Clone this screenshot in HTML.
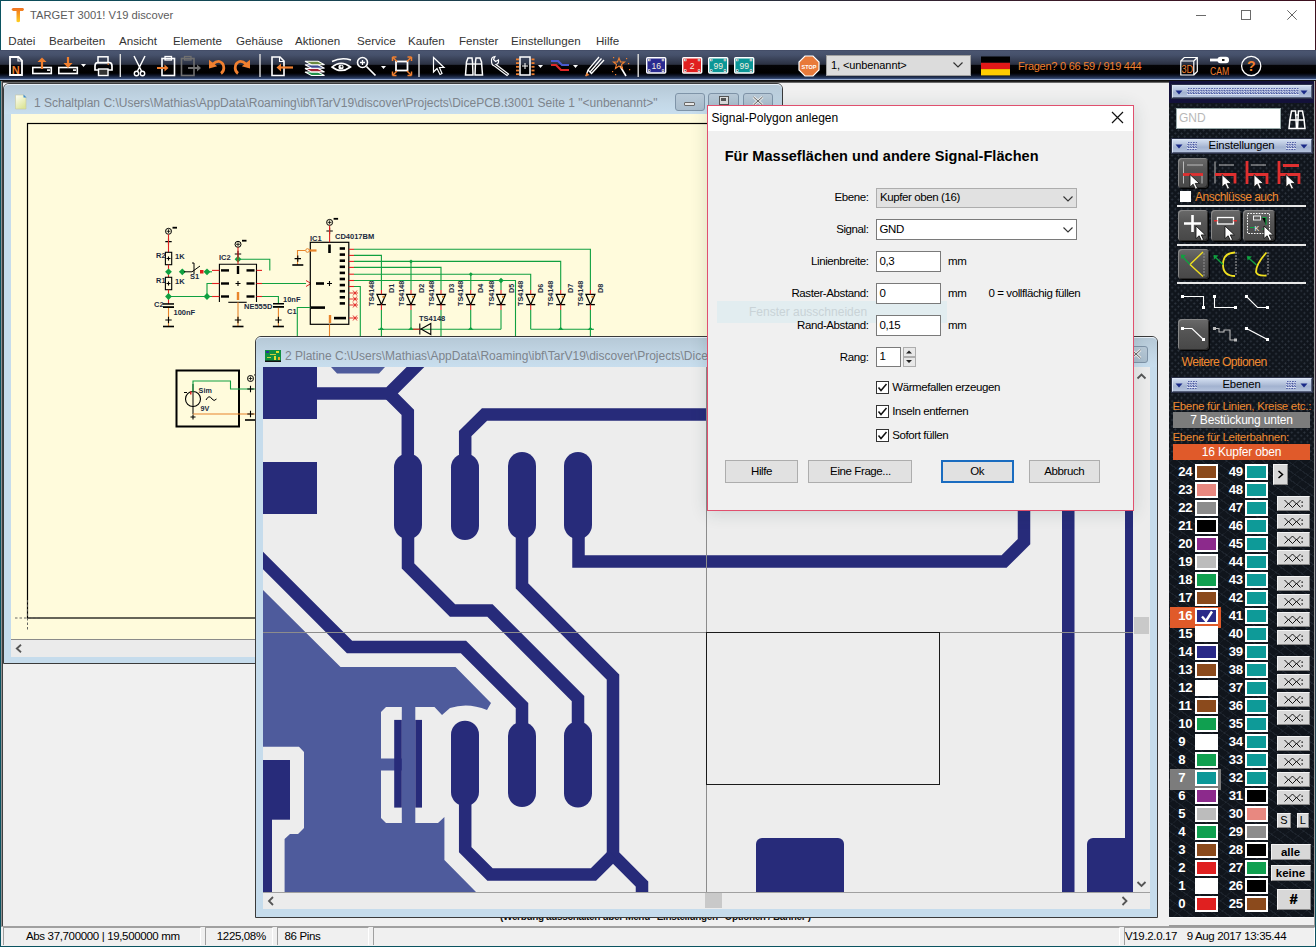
<!DOCTYPE html>
<html><head><meta charset="utf-8">
<style>
*{box-sizing:border-box;margin:0;padding:0}
html,body{width:1316px;height:947px;overflow:hidden;background:#f0f0f0;font-family:"Liberation Sans",sans-serif;position:relative}
.a{position:absolute}
.t{position:absolute;white-space:nowrap;line-height:1}
svg{position:absolute;overflow:visible}
</style></head><body>

<div class="a" style="left:0px;top:0px;width:1316px;height:50px;background:#fff"></div>
<div class="a" style="left:0px;top:0px;width:1316px;height:1px;background:linear-gradient(90deg,#0b4e5b 0%,#1f3a48 45%,#3a1a28 80%,#3d0f1e 100%)"></div>
<div class="a" style="left:0px;top:0px;width:1px;height:947px;background:#0b5361"></div>
<div class="a" style="left:1315px;top:0px;width:1px;height:947px;background:linear-gradient(#3d0f1e,#2a3040 60%,#0b5361)"></div>
<div class="a" style="left:0px;top:946px;width:1316px;height:1px;background:#0b5361"></div>
<svg style="left:10px;top:6px" width="16" height="18" viewBox="0 0 16 18"><defs><linearGradient id="tg" x1="0" y1="0" x2="0" y2="1"><stop offset="0" stop-color="#f07020"/><stop offset="1" stop-color="#ffd020"/></linearGradient></defs><path d="M1.5 3.5 Q2 1.5 4 2 L12 2 Q14 1.5 14 3.5 L13 5 L10 5 L10 15.5 Q8 17 6.5 15.5 L6.5 5 L3 5 Z" fill="url(#tg)"/></svg>
<div class="t" style="left:30.00px;top:10.12px;font-size:11.2px;color:#5c5c5c;font-weight:normal;">TARGET 3001! V19 discover</div>
<div class="a" style="left:1196px;top:15px;width:10px;height:1px;background:#6a6a6a"></div>
<div class="a" style="left:1241px;top:10px;width:10px;height:10px;border:1px solid #6a6a6a"></div>
<svg style="left:1287px;top:10px" width="10" height="10" viewBox="0 0 10 10"><path d="M0.3 0.3 L9.7 9.7 M9.7 0.3 L0.3 9.7" stroke="#666" stroke-width="1"/></svg>
<div class="t" style="left:8.30px;top:35.18px;font-size:11.6px;color:#333;font-weight:normal;">Datei</div>
<div class="t" style="left:49.00px;top:35.18px;font-size:11.6px;color:#333;font-weight:normal;">Bearbeiten</div>
<div class="t" style="left:119.00px;top:35.18px;font-size:11.6px;color:#333;font-weight:normal;">Ansicht</div>
<div class="t" style="left:173.00px;top:35.18px;font-size:11.6px;color:#333;font-weight:normal;">Elemente</div>
<div class="t" style="left:236.00px;top:35.18px;font-size:11.6px;color:#333;font-weight:normal;">Gehäuse</div>
<div class="t" style="left:295.00px;top:35.18px;font-size:11.6px;color:#333;font-weight:normal;">Aktionen</div>
<div class="t" style="left:357.00px;top:35.18px;font-size:11.6px;color:#333;font-weight:normal;">Service</div>
<div class="t" style="left:408.00px;top:35.18px;font-size:11.6px;color:#333;font-weight:normal;">Kaufen</div>
<div class="t" style="left:459.00px;top:35.18px;font-size:11.6px;color:#333;font-weight:normal;">Fenster</div>
<div class="t" style="left:511.00px;top:35.18px;font-size:11.6px;color:#333;font-weight:normal;">Einstellungen</div>
<div class="t" style="left:596.00px;top:35.18px;font-size:11.6px;color:#333;font-weight:normal;">Hilfe</div>
<div class="a" style="left:1px;top:81px;width:1168px;height:846px;background:#f0f0f0"></div>
<div class="a" style="left:1px;top:81px;width:1168px;height:1px;background:#222"></div>
<div class="a" style="left:1px;top:82px;width:1168px;height:1px;background:#6a6a6a"></div>
<div class="a" style="left:1px;top:81px;width:1px;height:846px;background:#909090"></div>
<div class="a" style="left:2px;top:81px;width:1px;height:846px;background:#404040"></div>
<div class="a" style="left:1px;top:926px;width:1168px;height:1px;background:#a0a0a0"></div>
<div class="a" style="left:0px;top:50px;width:1316px;height:31px;background:linear-gradient(#3e4660 0px,#4a5570 1px,#46516b 5px,#2c3244 14px,#252a38 14.5px,#050508 15px,#000 23px,#0a1020 25px,#2a3c60 28px,#3a5080 28.8px,#9aaed0 29px,#9aaed0 30px,#101010 30px)"></div>
<svg style="left:0;top:0" width="1316" height="82"><path d="M10 57 L18.5 57 L22 60.5 L22 75 L10 75 Z" fill="none" stroke="#fff" stroke-width="1.8"/><path d="M18 57 L18 61 L22 61" fill="none" stroke="#fff" stroke-width="1.2"/><text x="15.8" y="73.5" font-family="Liberation Sans" font-size="11" font-weight="bold" fill="#f08030" text-anchor="middle">N</text><rect x="32.8" y="67.5" width="18.5" height="6" fill="none" stroke="#fff" stroke-width="1.6"/><rect x="47" y="69.3" width="3" height="1.6" fill="#fff"/><path d="M42 69 L42 59" stroke="#f08030" stroke-width="2.2"/><path d="M37.5 62 L42 57.5 L46.5 62 Z" fill="#f08030"/><rect x="58.8" y="67.5" width="18.5" height="6" fill="none" stroke="#fff" stroke-width="1.6"/><rect x="73" y="69.3" width="3" height="1.6" fill="#fff"/><path d="M68 57 L68 65" stroke="#f08030" stroke-width="2.2"/><path d="M63.5 63 L68 68 L72.5 63 Z" fill="#f08030"/><path d="M81 64 L86 64 L83.5 67 Z" fill="#fff"/><rect x="98" y="56.8" width="10" height="6" fill="none" stroke="#fff" stroke-width="1.5"/><path d="M95 66 Q95 62.5 98 62.5 L109 62.5 Q112 62.5 112 66 L112 70 L95 70 Z" fill="none" stroke="#fff" stroke-width="1.7"/><rect x="98.5" y="69" width="9.5" height="6.5" fill="#333" stroke="#fff" stroke-width="1.4"/><rect x="107.5" y="63.5" width="1.5" height="1.3" fill="#f08030"/><rect x="119.6" y="54" width="1.4" height="23" fill="#ddd"/><path d="M134 56 L141.5 71 M145 56 L137.5 71" stroke="#fff" stroke-width="1.5"/><circle cx="136.5" cy="73.5" r="2.2" fill="none" stroke="#fff" stroke-width="1.4"/><circle cx="142.5" cy="73.5" r="2.2" fill="none" stroke="#fff" stroke-width="1.4"/><rect x="162" y="58.5" width="12.5" height="17" fill="none" stroke="#fff" stroke-width="1.6"/><rect x="165" y="56.5" width="6.5" height="3.5" fill="none" stroke="#fff" stroke-width="1.3"/><path d="M157 68 L166 68" stroke="#f08030" stroke-width="2"/><path d="M164.5 64.5 L168.5 68 L164.5 71.5 Z" fill="#f08030"/><rect x="181.5" y="58.5" width="12.5" height="17" fill="none" stroke="#707070" stroke-width="1.6"/><rect x="184.5" y="56.5" width="6.5" height="3.5" fill="none" stroke="#707070" stroke-width="1.3"/><path d="M188 68 L198 68" stroke="#707070" stroke-width="2"/><path d="M197 64.5 L201 68 L197 71.5 Z" fill="#707070"/><path d="M213 64 Q216.5 60.8 219.5 61.5 Q223.8 63 223.8 68 Q223.8 71.5 221 73.5" fill="none" stroke="#f08030" stroke-width="2.8"/><path d="M209 59.8 L209 68.6 L217.2 66.2 Z" fill="#f08030"/><path d="M246 64 Q242.5 60.8 239.5 61.5 Q235.2 63 235.2 68 Q235.2 71.5 238 73.5" fill="none" stroke="#f08030" stroke-width="2.8"/><path d="M250 59.8 L250 68.6 L241.8 66.2 Z" fill="#f08030"/><rect x="259.3" y="54" width="1.4" height="23" fill="#ddd"/><path d="M272 57 L280 57 L284 61 L284 75.5 L272 75.5 Z" fill="none" stroke="#fff" stroke-width="1.6"/><path d="M279.5 57 L279.5 61.5 L284 61.5" fill="none" stroke="#fff" stroke-width="1.1"/><rect x="279" y="66" width="0" height="0"/><path d="M279 67.5 L293 67.5" stroke="#f08030" stroke-width="2.2"/><path d="M281 63.5 L276.5 67.5 L281 71.5 Z" fill="#f08030"/><path d="M305 72.0 L318 72.0 L324.5 75.5 L311.5 75.5 Z" fill="#20904a" stroke="#fff" stroke-width="1.1"/><path d="M305 68.4 L318 68.4 L324.5 71.9 L311.5 71.9 Z" fill="#a02030" stroke="#fff" stroke-width="1.1"/><path d="M305 64.8 L318 64.8 L324.5 68.3 L311.5 68.3 Z" fill="#3a4a90" stroke="#fff" stroke-width="1.1"/><path d="M305 61.2 L318 61.2 L324.5 64.7 L311.5 64.7 Z" fill="#6a8a40" stroke="#fff" stroke-width="1.1"/><path d="M332 61.5 Q341 57 351 60" fill="none" stroke="#fff" stroke-width="1.4"/><path d="M332 67 Q341 59.5 350.5 67 Q341 74 332 67 Z" fill="none" stroke="#fff" stroke-width="1.6"/><circle cx="341" cy="67" r="2.6" fill="#fff"/><circle cx="341.5" cy="66.5" r="1" fill="#222"/><circle cx="362.5" cy="62.5" r="5" fill="none" stroke="#fff" stroke-width="1.6"/><path d="M360 62.5 L365 62.5 M362.5 60 L362.5 65" stroke="#fff" stroke-width="1.3"/><path d="M366.5 66.5 L375.5 75.5" stroke="#fff" stroke-width="1.7"/><path d="M381 66 L386 66 L383.5 69 Z" fill="#fff"/><rect x="396" y="61.5" width="11.5" height="9" fill="none" stroke="#fff" stroke-width="1.8"/><path d="M393 57.5 L397 61.5 M411 57.5 L407 61.5 M393 75 L397 71 M411 75 L407 71" stroke="#f08030" stroke-width="1.5"/><path d="M392.5 57 L396.5 57 M392.5 57 L392.5 61 M411.5 57 L407.5 57 M411.5 57 L411.5 61 M392.5 75.5 L396.5 75.5 M392.5 75.5 L392.5 71.5 M411.5 75.5 L407.5 75.5 M411.5 75.5 L411.5 71.5" stroke="#f08030" stroke-width="1.5"/><rect x="418.3" y="54" width="1.4" height="23" fill="#ddd"/><path d="M433.5 57.5 L433.5 72 L437 68.5 L440 74.5 L442 73.5 L439.5 67.5 L444 67.5 Z" fill="none" stroke="#fff" stroke-width="1.2"/><path d="M465.5 75 L466.5 62 L468 58 L472 58 L472.5 62 L473 75 Z M475 75 L475.5 62 L476 58 L480 58 L481.5 62 L482.5 75 Z" fill="none" stroke="#fff" stroke-width="1.5"/><path d="M466 64 L482 64" stroke="#fff" stroke-width="1.3"/><path d="M491.5 61 Q491 57 495 56.5 L493.5 59.5 L495.5 61.5 L498.5 60 Q499 64 496 64.5 L508.5 74 L507 75.5 L494.5 66 Q491.5 65.5 491.5 61 Z" fill="none" stroke="#fff" stroke-width="1.2"/><rect x="520" y="57" width="10" height="18" fill="none" stroke="#fff" stroke-width="1.5"/><path d="M525 63 L525 69 M522 66 L528 66" stroke="#fff" stroke-width="1"/><rect x="516" y="58.5" width="3" height="1.8" fill="#f08030"/><rect x="531.5" y="58.5" width="3" height="1.8" fill="#f08030"/><rect x="516" y="62.2" width="3" height="1.8" fill="#f08030"/><rect x="531.5" y="62.2" width="3" height="1.8" fill="#f08030"/><rect x="516" y="65.9" width="3" height="1.8" fill="#f08030"/><rect x="531.5" y="65.9" width="3" height="1.8" fill="#f08030"/><rect x="516" y="69.6" width="3" height="1.8" fill="#f08030"/><rect x="531.5" y="69.6" width="3" height="1.8" fill="#f08030"/><rect x="516" y="73.3" width="3" height="1.8" fill="#f08030"/><rect x="531.5" y="73.3" width="3" height="1.8" fill="#f08030"/><path d="M538 65 L543 65 L540.5 68 Z" fill="#fff"/><path d="M551 61 L558 61 L562 65 L569 65" fill="none" stroke="#4a5ad0" stroke-width="2.2"/><path d="M551 65 L556 65 L561 70 L569 70" fill="none" stroke="#e02828" stroke-width="2.2"/><path d="M573 65 L578 65 L575.5 68 Z" fill="#fff"/><path d="M586 76 L588 70 L599 57 M588 70 L591.5 73.5 L604 60 M590 72 L601.5 58.5" fill="none" stroke="#fff" stroke-width="1.3"/><path d="M585.5 76.5 L586.5 72.5 L589.5 75 Z" fill="#f08030"/><path d="M620 66 L626 76" stroke="#fff" stroke-width="1.6"/><path d="M619 58 L620.5 62 L624.5 62 L621.5 64.5 L622.5 68.5 L619 66 L615.5 68.5 L616.5 64.5 L613.5 62 L617.5 62 Z" fill="none" stroke="#f08030" stroke-width="1.1"/><rect x="613" y="57" width="1.2" height="1.2" fill="#f08030"/><rect x="626" y="58" width="1.2" height="1.2" fill="#f08030"/><rect x="628" y="63" width="1.2" height="1.2" fill="#f08030"/><rect x="612" y="71" width="1.2" height="1.2" fill="#f08030"/><rect x="615" y="74" width="1.2" height="1.2" fill="#f08030"/><rect x="629" y="69" width="1.2" height="1.2" fill="#f08030"/><rect x="637.5" y="54" width="1.4" height="23" fill="#ddd"/><rect x="646.7" y="57.7" width="19" height="15.3" rx="1" fill="#2a2a90" stroke="#fff" stroke-width="1.4"/><rect x="648.0" y="58.800000000000004" width="2.4" height="2.4" fill="#fff"/><rect x="648.6999999999999" y="59.5" width="1" height="1" fill="#000"/><rect x="661.8000000000001" y="58.800000000000004" width="2.4" height="2.4" fill="#fff"/><rect x="662.5" y="59.5" width="1" height="1" fill="#000"/><rect x="648.0" y="69.39999999999999" width="2.4" height="2.4" fill="#fff"/><rect x="648.6999999999999" y="70.1" width="1" height="1" fill="#000"/><rect x="661.8000000000001" y="69.39999999999999" width="2.4" height="2.4" fill="#fff"/><rect x="662.5" y="70.1" width="1" height="1" fill="#000"/><text transform="translate(656.2,68.8) scale(0.9,1)" font-family="Liberation Sans" font-size="9.5" fill="#f4f0e0" text-anchor="middle">16</text><rect x="682.7" y="57.7" width="19" height="15.3" rx="1" fill="#e02020" stroke="#fff" stroke-width="1.4"/><rect x="684.0" y="58.800000000000004" width="2.4" height="2.4" fill="#fff"/><rect x="684.6999999999999" y="59.5" width="1" height="1" fill="#000"/><rect x="697.8000000000001" y="58.800000000000004" width="2.4" height="2.4" fill="#fff"/><rect x="698.5" y="59.5" width="1" height="1" fill="#000"/><rect x="684.0" y="69.39999999999999" width="2.4" height="2.4" fill="#fff"/><rect x="684.6999999999999" y="70.1" width="1" height="1" fill="#000"/><rect x="697.8000000000001" y="69.39999999999999" width="2.4" height="2.4" fill="#fff"/><rect x="698.5" y="70.1" width="1" height="1" fill="#000"/><text transform="translate(692.2,68.8) scale(0.9,1)" font-family="Liberation Sans" font-size="9.5" fill="#f4f0e0" text-anchor="middle">2</text><rect x="708.7" y="57.7" width="19" height="15.3" rx="1" fill="#0c9696" stroke="#fff" stroke-width="1.4"/><rect x="710.0" y="58.800000000000004" width="2.4" height="2.4" fill="#fff"/><rect x="710.6999999999999" y="59.5" width="1" height="1" fill="#000"/><rect x="723.8000000000001" y="58.800000000000004" width="2.4" height="2.4" fill="#fff"/><rect x="724.5" y="59.5" width="1" height="1" fill="#000"/><rect x="710.0" y="69.39999999999999" width="2.4" height="2.4" fill="#fff"/><rect x="710.6999999999999" y="70.1" width="1" height="1" fill="#000"/><rect x="723.8000000000001" y="69.39999999999999" width="2.4" height="2.4" fill="#fff"/><rect x="724.5" y="70.1" width="1" height="1" fill="#000"/><text transform="translate(718.2,68.8) scale(0.9,1)" font-family="Liberation Sans" font-size="9.5" fill="#f4f0e0" text-anchor="middle">99</text><rect x="734.7" y="57.7" width="19" height="15.3" rx="1" fill="#0c9696" stroke="#fff" stroke-width="1.4"/><rect x="736.0" y="58.800000000000004" width="2.4" height="2.4" fill="#fff"/><rect x="736.6999999999999" y="59.5" width="1" height="1" fill="#000"/><rect x="749.8000000000001" y="58.800000000000004" width="2.4" height="2.4" fill="#fff"/><rect x="750.5" y="59.5" width="1" height="1" fill="#000"/><rect x="736.0" y="69.39999999999999" width="2.4" height="2.4" fill="#fff"/><rect x="736.6999999999999" y="70.1" width="1" height="1" fill="#000"/><rect x="749.8000000000001" y="69.39999999999999" width="2.4" height="2.4" fill="#fff"/><rect x="750.5" y="70.1" width="1" height="1" fill="#000"/><text transform="translate(744.2,68.8) scale(0.9,1)" font-family="Liberation Sans" font-size="9.5" fill="#f4f0e0" text-anchor="middle">99</text><path d="M805 56 L813 56 L819 62 L819 70 L813 76 L805 76 L799 70 L799 62 Z" fill="#e87a3a" stroke="#fff" stroke-width="1.2"/><text x="809" y="68.5" font-family="Liberation Sans" font-size="5.5" font-weight="bold" fill="#fff" text-anchor="middle">STOP</text><rect x="981" y="56.5" width="29" height="6.3" fill="#000"/><rect x="981" y="62.8" width="29" height="6.3" fill="#e01818"/><rect x="981" y="69.1" width="29" height="6.3" fill="#ffcc00"/><path d="M1180.8 61 L1193.8 61 L1193.8 75 L1180.8 75 Z M1180.8 61 L1184.3 57.5 L1197.3 57.5 L1197.3 71.5 L1193.8 75 M1193.8 61 L1197.3 57.5" fill="none" stroke="#fff" stroke-width="1.2"/><text transform="translate(1187.3,72.6) scale(0.85,1)" font-family="Liberation Sans" font-size="10.8" fill="#f08030" text-anchor="middle">3D</text><rect x="1210" y="58.6" width="9" height="2.8" fill="#fff"/><rect x="1217.5" y="56.8" width="11.5" height="6.4" rx="3" fill="#fff"/><rect x="1222" y="59" width="2.5" height="2" fill="#222"/><text transform="translate(1219.6,74.6) scale(0.82,1)" font-family="Liberation Sans" font-size="10.5" fill="#f08030" text-anchor="middle">CAM</text><circle cx="1251.2" cy="66" r="9.6" fill="none" stroke="#fff" stroke-width="1.3"/><text x="1251.2" y="71.3" font-family="Liberation Sans" font-size="14" font-weight="bold" fill="#f08030" text-anchor="middle">?</text></svg>
<div class="a" style="left:826px;top:55px;width:145px;height:21px;background:#dcdcdc;border:1px solid #a0a0a0"></div>
<div class="t" style="left:831.00px;top:60.19px;font-size:11px;color:#000;font-weight:normal;letter-spacing:-0.1px">1, &lt;unbenannt&gt;</div>
<svg style="left:953px;top:62px" width="10" height="6"><path d="M0.5 0.5 L5 5 L9.5 0.5" fill="none" stroke="#333" stroke-width="1.2"/></svg>
<div class="t" style="left:1018.00px;top:60.69px;font-size:11px;color:#f08030;font-weight:normal;letter-spacing:-0.25px">Fragen? 0 66 59 / 919 444</div>
<div class="a" style="left:3px;top:83px;width:780px;height:581px;background:#c6dcec;border:1px solid #3a3a3a;border-radius:6px 6px 0 0"></div>
<div class="a" style="left:4px;top:84px;width:778px;height:30px;background:linear-gradient(#b6c9d7,#c3d7e6 60%,#c8deee);border-radius:5px 5px 0 0;border-top:1px solid #e8f0f8"></div>
<svg style="left:15px;top:94px" width="12" height="16" viewBox="0 0 12 16"><defs><linearGradient id="dg" x1="0" y1="0" x2="0.6" y2="1"><stop offset="0" stop-color="#fffff8"/><stop offset="1" stop-color="#dde59a"/></linearGradient></defs><path d="M0.5 1 L8.5 1 L11 3.5 L11 15 L0.5 15 Z" fill="url(#dg)" stroke="#c8c8a0" stroke-width="0.6"/><path d="M8.5 0.5 L11.5 3.5 L8.5 3.5 Z" fill="#3a8ad0"/></svg>
<div class="t" style="left:34.00px;top:97.14px;font-size:12px;color:#7d848c;font-weight:normal;">1 Schaltplan C:\Users\Mathias\AppData\Roaming\ibf\TarV19\discover\Projects\DicePCB.t3001 Seite 1 &quot;&lt;unbenannt&gt;&quot;</div>
<div class="a" style="left:674.5px;top:93.3px;width:30.5px;height:17.5px;border:1px solid #7f94a8;border-radius:3px;background:linear-gradient(#b9cad8,#aabdcd)"></div>
<div class="a" style="left:708px;top:93.3px;width:31px;height:17.5px;border:1px solid #7f94a8;border-radius:3px;background:linear-gradient(#b9cad8,#aabdcd)"></div>
<div class="a" style="left:742.5px;top:93.3px;width:30.5px;height:17.5px;border:1px solid #7f94a8;border-radius:3px;background:linear-gradient(#b9cad8,#aabdcd)"></div>
<div class="a" style="left:684px;top:101.5px;width:11px;height:4px;background:#e8e8e8;border:1px solid #6a6a6a;border-radius:1px"></div>
<div class="a" style="left:718.5px;top:96px;width:10px;height:9px;background:#e0e0e0;border:1px solid #555"></div>
<div class="a" style="left:721px;top:98px;width:5px;height:2.5px;background:#555"></div>
<svg style="left:752px;top:96px" width="12" height="10"><path d="M1.5 1 L10.5 9 M10.5 1 L1.5 9" stroke="#eee" stroke-width="3"/><path d="M1.5 1 L10.5 9 M10.5 1 L1.5 9" stroke="#666" stroke-width="1"/></svg>
<div class="a" style="left:11px;top:114px;width:764px;height:525px;background:#fffbdc"></div>
<div class="a" style="left:11px;top:639px;width:764px;height:18px;background:#ebebeb;border-top:1px solid #8a8a8a"></div>
<svg style="left:15px;top:644px" width="8" height="9"><path d="M6 0.8 L1.8 4.5 L6 8.2" fill="none" stroke="#555" stroke-width="1.8"/></svg>
<svg style="left:11px;top:114px;overflow:hidden" width="764" height="525" viewBox="11 114 764 525"><rect x="27.5" y="123.5" width="800" height="494.5" fill="none" stroke="#000" stroke-width="1.2"/><path d="M15 618 L40 618 M27.5 600 L27.5 630" stroke="#555" stroke-width="0.9" stroke-dasharray="2.5 2"/><circle cx="168.5" cy="231.3" r="3" fill="none" stroke="#000" stroke-width="1"/><path d="M166.5 231.3 L170.5 231.3 M168.5 229.3 L168.5 233.3" stroke="#000" stroke-width="0.8"/><rect x="172.5" y="226.8" width="4.5" height="1.8" fill="#000"/><path d="M165.3 241.6 L171.7 241.6 M168.5 238.4 L168.5 244.79999999999998" stroke="#000" stroke-width="1.1"/><path d="M168.5 234.3 L168.5 252.3" fill="none" stroke="#e02020" stroke-width="1.1"/><rect x="165.4" y="252.3" width="6.3" height="12.4" fill="none" stroke="#000" stroke-width="1.1"/><path d="M166.5 258.5 L170.5 258.5 M168.5 256.5 L168.5 260.5" stroke="#000" stroke-width="1.1"/><path d="M168.5 264.7 L168.5 277.3" fill="none" stroke="#e02020" stroke-width="1.1"/><rect x="165.4" y="277.3" width="6.3" height="12.4" fill="none" stroke="#000" stroke-width="1.1"/><path d="M166.5 283.5 L170.5 283.5 M168.5 281.5 L168.5 285.5" stroke="#000" stroke-width="1.1"/><path d="M168.5 289.7 L168.5 304" fill="none" stroke="#e02020" stroke-width="1.1"/><path d="M165.1 271.8 L168.5 268.40000000000003 L171.9 271.8 L168.5 275.2 Z" fill="#10a040"/><path d="M165.1 296.5 L168.5 293.1 L171.9 296.5 L168.5 299.9 Z" fill="#10a040"/><rect x="163" y="303.2" width="11" height="1.5" fill="#000"/><rect x="163" y="306.2" width="11" height="1.8" fill="#000"/><path d="M168.5 308 L168.5 326.5" fill="none" stroke="#e8842a" stroke-width="1.1"/><path d="M165.3 320 L171.7 320 M168.5 316.8 L168.5 323.2" stroke="#000" stroke-width="1.1"/><rect x="163.0" y="325.7" width="11" height="1.6" fill="#000"/><text x="156" y="258" font-family="Liberation Sans" font-size="7.5" font-weight="bold" fill="#1a2a40">R2</text><text x="175" y="258.5" font-family="Liberation Sans" font-size="7.5" font-weight="bold" fill="#1a2a40">1K</text><text x="156" y="283" font-family="Liberation Sans" font-size="7.5" font-weight="bold" fill="#1a2a40">R1</text><text x="175" y="283.5" font-family="Liberation Sans" font-size="7.5" font-weight="bold" fill="#1a2a40">1K</text><text x="154" y="307" font-family="Liberation Sans" font-size="7.5" font-weight="bold" fill="#1a2a40">C2</text><text x="173.5" y="315" font-family="Liberation Sans" font-size="7.5" font-weight="bold" fill="#1a2a40">100nF</text><path d="M178.9 271.8 L182.3 268.40000000000003 L185.70000000000002 271.8 L182.3 275.2 Z" fill="#10a040"/><path d="M203.6 271.8 L207 268.40000000000003 L210.4 271.8 L207 275.2 Z" fill="#10a040"/><rect x="200" y="270" width="3.5" height="3.5" fill="#e02020"/><path d="M184 271.8 L192 271.8 L200 266" fill="none" stroke="#000" stroke-width="1"/><path d="M192 263 L194 263 L194 274" fill="none" stroke="#000" stroke-width="1"/><text x="190" y="279" font-family="Liberation Sans" font-size="7.5" font-weight="bold" fill="#1a2a40">S1</text><path d="M219.4 302 L219.4 264.3 L256.5 264.3 L256.5 302" fill="none" stroke="#000" stroke-width="1.1"/><path d="M228.3 302.3 L246.7 302.3" stroke="#000" stroke-width="1.1"/><rect x="221" y="269.2" width="8" height="2.4" fill="#000"/><path d="M212 270.4 L219.4 270.4" stroke="#e02020" stroke-width="1.1"/><rect x="221" y="282.3" width="8" height="2.4" fill="#000"/><path d="M212 283.5 L219.4 283.5" stroke="#e02020" stroke-width="1.1"/><rect x="221" y="295.3" width="8" height="2.4" fill="#000"/><path d="M212 296.5 L219.4 296.5" stroke="#e02020" stroke-width="1.1"/><rect x="246.5" y="269.2" width="8" height="2.4" fill="#000"/><path d="M256.5 270.4 L262 270.4" stroke="#e02020" stroke-width="1.1"/><rect x="246.5" y="282.3" width="8" height="2.4" fill="#000"/><path d="M256.5 283.5 L262 283.5" stroke="#e02020" stroke-width="1.1"/><rect x="246.5" y="295.3" width="8" height="2.4" fill="#000"/><path d="M256.5 296.5 L262 296.5" stroke="#e02020" stroke-width="1.1"/><rect x="236.8" y="266" width="2.4" height="8" fill="#000"/><rect x="236.8" y="292" width="2.4" height="8" fill="#e8842a"/><path d="M235.5 283.5 L240.5 283.5 M238 281.0 L238 286.0" stroke="#000" stroke-width="1.1"/><text x="219" y="260" font-family="Liberation Sans" font-size="7.5" font-weight="bold" fill="#1a2a40">IC2</text><text x="244" y="309" font-family="Liberation Sans" font-size="7.5" font-weight="bold" fill="#1a2a40">NE555D</text><circle cx="238" cy="244.3" r="3" fill="none" stroke="#000" stroke-width="1"/><path d="M236 244.3 L240 244.3 M238 242.3 L238 246.3" stroke="#000" stroke-width="0.8"/><rect x="242" y="239.8" width="4.5" height="1.8" fill="#000"/><path d="M234.8 254 L241.2 254 M238 250.8 L238 257.2" stroke="#000" stroke-width="1.1"/><path d="M234.6 259.2 L238 255.79999999999998 L241.4 259.2 L238 262.59999999999997 Z" fill="#10a040"/><path d="M238 247.3 L238 264.3" fill="none" stroke="#e02020" stroke-width="1.1"/><path d="M238 259.2 L269.8 259.2 L269.8 270.4" fill="none" stroke="#10a040" stroke-width="1.1"/><path d="M238 302.3 L238 326.5" fill="none" stroke="#e8842a" stroke-width="1.1"/><path d="M234.8 320 L241.2 320 M238 316.8 L238 323.2" stroke="#000" stroke-width="1.1"/><rect x="232.5" y="325.7" width="11" height="1.6" fill="#000"/><path d="M168.5 296.5 L212 296.5" fill="none" stroke="#10a040" stroke-width="1.1"/><path d="M203.6 296.5 L207 293.1 L210.4 296.5 L207 299.9 Z" fill="#10a040"/><path d="M207 296.5 L207 283.5 L212 283.5" fill="none" stroke="#10a040" stroke-width="1.1"/><path d="M207 271.8 L212 271.8" fill="none" stroke="#10a040" stroke-width="1.1"/><path d="M262 283.5 L306 283.5" fill="none" stroke="#10a040" stroke-width="1.1"/><path d="M306 280.5 L311 283.5 L306 286.5" fill="none" stroke="#e02020" stroke-width="1"/><path d="M262 296.5 L278.4 296.5 L278.4 303" fill="none" stroke="#10a040" stroke-width="1.1"/><rect x="273" y="303" width="11" height="1.5" fill="#000"/><rect x="273" y="306" width="11" height="1.8" fill="#000"/><path d="M278.4 308 L278.4 326.5" fill="none" stroke="#e8842a" stroke-width="1.1"/><path d="M275.2 320 L281.59999999999997 320 M278.4 316.8 L278.4 323.2" stroke="#000" stroke-width="1.1"/><rect x="272.9" y="325.7" width="11" height="1.6" fill="#000"/><text x="283" y="302" font-family="Liberation Sans" font-size="7.5" font-weight="bold" fill="#1a2a40">10nF</text><text x="287" y="314" font-family="Liberation Sans" font-size="7.5" font-weight="bold" fill="#1a2a40">C1</text><rect x="310.3" y="242.3" width="38.5" height="82" fill="none" stroke="#000" stroke-width="1.2"/><circle cx="329.6" cy="222.4" r="3" fill="none" stroke="#000" stroke-width="1"/><path d="M327.6 222.4 L331.6 222.4 M329.6 220.4 L329.6 224.4" stroke="#000" stroke-width="0.8"/><rect x="333.6" y="217.9" width="4.5" height="1.8" fill="#000"/><path d="M326.40000000000003 231 L332.8 231 M329.6 227.8 L329.6 234.2" stroke="#000" stroke-width="1.1"/><path d="M329.6 225.4 L329.6 242.3" fill="none" stroke="#e02020" stroke-width="1.1"/><text x="310" y="240.5" font-family="Liberation Sans" font-size="7.5" font-weight="bold" fill="#1a2a40">IC1</text><text x="335" y="239" font-family="Liberation Sans" font-size="7.5" font-weight="bold" fill="#1a2a40">CD4017BM</text><rect x="339.7" y="247.2" width="5.3" height="2.6" fill="#000"/><rect x="339.7" y="253.29999999999998" width="5.3" height="2.6" fill="#000"/><rect x="339.7" y="259.4" width="5.3" height="2.6" fill="#000"/><rect x="339.7" y="265.5" width="5.3" height="2.6" fill="#000"/><rect x="339.7" y="271.59999999999997" width="5.3" height="2.6" fill="#000"/><rect x="339.7" y="277.7" width="5.3" height="2.6" fill="#000"/><rect x="339.7" y="283.8" width="5.3" height="2.6" fill="#000"/><rect x="339.7" y="289.9" width="5.3" height="2.6" fill="#000"/><rect x="339.7" y="296.0" width="5.3" height="2.6" fill="#000"/><rect x="339.7" y="302.09999999999997" width="5.3" height="2.6" fill="#000"/><rect x="334" y="316.8" width="12" height="2.6" fill="#000"/><rect x="328.2" y="244.5" width="2.6" height="8.5" fill="#000"/><rect x="316" y="282.2" width="8" height="2.6" fill="#000"/><rect x="310.5" y="306.3" width="14.5" height="2.6" fill="#000"/><rect x="328.8" y="315" width="2.4" height="8" fill="#e8842a"/><path d="M327.0 283.5 L332.0 283.5 M329.5 281.0 L329.5 286.0" stroke="#000" stroke-width="1.1"/><path d="M329.5 324.3 L329.5 338" fill="none" stroke="#e8842a" stroke-width="1.1"/><rect x="324.0" y="337.2" width="11" height="1.6" fill="#000"/><circle cx="307.5" cy="250.5" r="1.8" fill="none" stroke="#e8842a" stroke-width="1"/><rect x="309" y="249.4" width="7.5" height="2.2" fill="#e8842a"/><path d="M305.5 250.5 L297.5 250.5 L297.5 265" fill="none" stroke="#e8842a" stroke-width="1.1"/><path d="M294.6 258.6 L301.0 258.6 M297.8 255.40000000000003 L297.8 261.8" stroke="#000" stroke-width="1.1"/><rect x="292.3" y="264.2" width="11" height="1.6" fill="#000"/><path d="M297.3 339 L297.3 307.5 L310.3 307.5" fill="none" stroke="#10a040" stroke-width="1.1"/><path d="M348.8 249.3 L354 249.3" fill="none" stroke="#e02020" stroke-width="1.1"/><path d="M348.8 255.4 L354 255.4" fill="none" stroke="#e02020" stroke-width="1.1"/><path d="M348.8 261.4 L354 261.4" fill="none" stroke="#e02020" stroke-width="1.1"/><path d="M348.8 267.4 L354 267.4" fill="none" stroke="#e02020" stroke-width="1.1"/><path d="M348.8 274.2 L354 274.2" fill="none" stroke="#e02020" stroke-width="1.1"/><path d="M348.8 280.5 L354 280.5" fill="none" stroke="#e02020" stroke-width="1.1"/><path d="M348.8 286.5 L354 286.5" fill="none" stroke="#e02020" stroke-width="1.1"/><path d="M354 249.3 L590.4 249.3 L590.4 290" fill="none" stroke="#10a040" stroke-width="1.1"/><path d="M354 255.4 L381.4 255.4 L381.4 290" fill="none" stroke="#10a040" stroke-width="1.1"/><path d="M354 261.4 L560.7 261.4 L560.7 290" fill="none" stroke="#10a040" stroke-width="1.1"/><path d="M409 261.4 L411 259.4 L413 261.4 L411 263.4 Z" fill="#10a040"/><path d="M411 261.4 L411 290" fill="none" stroke="#10a040" stroke-width="1.1"/><path d="M354 267.4 L441 267.4 L441 290" fill="none" stroke="#10a040" stroke-width="1.1"/><path d="M354 274.2 L530.7 274.2 L530.7 290" fill="none" stroke="#10a040" stroke-width="1.1"/><path d="M468.8 274.2 L470.8 272.2 L472.8 274.2 L470.8 276.2 Z" fill="#10a040"/><path d="M470.8 274.2 L470.8 290" fill="none" stroke="#10a040" stroke-width="1.1"/><path d="M354 280.5 L515.5 280.5 L515.5 340" fill="none" stroke="#10a040" stroke-width="1.1"/><path d="M498.2 280.5 L501 277.7 L503.8 280.5 L501 283.3 Z" fill="#10a040"/><path d="M501 280.5 L501 290" fill="none" stroke="#10a040" stroke-width="1.1"/><path d="M354 286.5 L360.3 286.5 L360.3 340" fill="none" stroke="#10a040" stroke-width="1.1"/><path d="M349 293 L358 293 M353 290.5 L357 295.5 M353 295.5 L357 290.5" stroke="#e02020" stroke-width="0.9"/><path d="M349 299 L358 299 M353 296.5 L357 301.5 M353 301.5 L357 296.5" stroke="#e02020" stroke-width="0.9"/><path d="M349 305 L358 305 M353 302.5 L357 307.5 M353 307.5 L357 302.5" stroke="#e02020" stroke-width="0.9"/><path d="M349 318 L358 318 M353 315.5 L357 320.5 M353 320.5 L357 315.5" stroke="#e02020" stroke-width="0.9"/><path d="M376.9 294.3 L385.9 294.3 L381.4 304.6 Z" fill="none" stroke="#000" stroke-width="1.2"/><path d="M376.9 304.6 L385.9 304.6" stroke="#000" stroke-width="1.3"/><path d="M381.4 290 L381.4 294.3 M381.4 304.6 L381.4 310" stroke="#e02020" stroke-width="1.1"/><rect x="382.4" y="295.8" width="2" height="2" fill="#e8842a"/><path d="M381.4 310 L381.4 340" fill="none" stroke="#10a040" stroke-width="1.1"/><text transform="translate(373.9,306) rotate(-90)" font-family="Liberation Sans" font-size="7.2" font-weight="bold" fill="#1a2a40">TS4148</text><text transform="translate(393.9,293) rotate(-90)" font-family="Liberation Sans" font-size="7.2" font-weight="bold" fill="#1a2a40">D1</text><path d="M406.5 294.3 L415.5 294.3 L411 304.6 Z" fill="none" stroke="#000" stroke-width="1.2"/><path d="M406.5 304.6 L415.5 304.6" stroke="#000" stroke-width="1.3"/><path d="M411 290 L411 294.3 M411 304.6 L411 310" stroke="#e02020" stroke-width="1.1"/><rect x="412" y="295.8" width="2" height="2" fill="#e8842a"/><path d="M411 310 L411 329.2" fill="none" stroke="#10a040" stroke-width="1.1"/><text transform="translate(403.5,306) rotate(-90)" font-family="Liberation Sans" font-size="7.2" font-weight="bold" fill="#1a2a40">TS4148</text><text transform="translate(423.5,293) rotate(-90)" font-family="Liberation Sans" font-size="7.2" font-weight="bold" fill="#1a2a40">D2</text><path d="M436.5 294.3 L445.5 294.3 L441 304.6 Z" fill="none" stroke="#000" stroke-width="1.2"/><path d="M436.5 304.6 L445.5 304.6" stroke="#000" stroke-width="1.3"/><path d="M441 290 L441 294.3 M441 304.6 L441 310" stroke="#e02020" stroke-width="1.1"/><rect x="442" y="295.8" width="2" height="2" fill="#e8842a"/><path d="M441 310 L441 340" fill="none" stroke="#10a040" stroke-width="1.1"/><text transform="translate(433.5,306) rotate(-90)" font-family="Liberation Sans" font-size="7.2" font-weight="bold" fill="#1a2a40">TS4148</text><text transform="translate(453.5,293) rotate(-90)" font-family="Liberation Sans" font-size="7.2" font-weight="bold" fill="#1a2a40">D3</text><path d="M466.2 294.3 L475.2 294.3 L470.7 304.6 Z" fill="none" stroke="#000" stroke-width="1.2"/><path d="M466.2 304.6 L475.2 304.6" stroke="#000" stroke-width="1.3"/><path d="M470.7 290 L470.7 294.3 M470.7 304.6 L470.7 310" stroke="#e02020" stroke-width="1.1"/><rect x="471.7" y="295.8" width="2" height="2" fill="#e8842a"/><path d="M470.7 310 L470.7 329.2" fill="none" stroke="#10a040" stroke-width="1.1"/><text transform="translate(463.2,306) rotate(-90)" font-family="Liberation Sans" font-size="7.2" font-weight="bold" fill="#1a2a40">TS4148</text><text transform="translate(483.2,293) rotate(-90)" font-family="Liberation Sans" font-size="7.2" font-weight="bold" fill="#1a2a40">D4</text><path d="M496.5 294.3 L505.5 294.3 L501 304.6 Z" fill="none" stroke="#000" stroke-width="1.2"/><path d="M496.5 304.6 L505.5 304.6" stroke="#000" stroke-width="1.3"/><path d="M501 290 L501 294.3 M501 304.6 L501 310" stroke="#e02020" stroke-width="1.1"/><rect x="502" y="295.8" width="2" height="2" fill="#e8842a"/><path d="M501 310 L501 329.2" fill="none" stroke="#10a040" stroke-width="1.1"/><text transform="translate(493.5,306) rotate(-90)" font-family="Liberation Sans" font-size="7.2" font-weight="bold" fill="#1a2a40">TS4148</text><text transform="translate(513.5,293) rotate(-90)" font-family="Liberation Sans" font-size="7.2" font-weight="bold" fill="#1a2a40">D5</text><path d="M526.2 294.3 L535.2 294.3 L530.7 304.6 Z" fill="none" stroke="#000" stroke-width="1.2"/><path d="M526.2 304.6 L535.2 304.6" stroke="#000" stroke-width="1.3"/><path d="M530.7 290 L530.7 294.3 M530.7 304.6 L530.7 310" stroke="#e02020" stroke-width="1.1"/><rect x="531.7" y="295.8" width="2" height="2" fill="#e8842a"/><path d="M530.7 310 L530.7 329.2" fill="none" stroke="#10a040" stroke-width="1.1"/><text transform="translate(523.2,306) rotate(-90)" font-family="Liberation Sans" font-size="7.2" font-weight="bold" fill="#1a2a40">TS4148</text><text transform="translate(543.2,293) rotate(-90)" font-family="Liberation Sans" font-size="7.2" font-weight="bold" fill="#1a2a40">D6</text><path d="M556.2 294.3 L565.2 294.3 L560.7 304.6 Z" fill="none" stroke="#000" stroke-width="1.2"/><path d="M556.2 304.6 L565.2 304.6" stroke="#000" stroke-width="1.3"/><path d="M560.7 290 L560.7 294.3 M560.7 304.6 L560.7 310" stroke="#e02020" stroke-width="1.1"/><rect x="561.7" y="295.8" width="2" height="2" fill="#e8842a"/><path d="M560.7 310 L560.7 329.2" fill="none" stroke="#10a040" stroke-width="1.1"/><text transform="translate(553.2,306) rotate(-90)" font-family="Liberation Sans" font-size="7.2" font-weight="bold" fill="#1a2a40">TS4148</text><text transform="translate(573.2,293) rotate(-90)" font-family="Liberation Sans" font-size="7.2" font-weight="bold" fill="#1a2a40">D7</text><path d="M585.9 294.3 L594.9 294.3 L590.4 304.6 Z" fill="none" stroke="#000" stroke-width="1.2"/><path d="M585.9 304.6 L594.9 304.6" stroke="#000" stroke-width="1.3"/><path d="M590.4 290 L590.4 294.3 M590.4 304.6 L590.4 310" stroke="#e02020" stroke-width="1.1"/><rect x="591.4" y="295.8" width="2" height="2" fill="#e8842a"/><path d="M590.4 310 L590.4 340" fill="none" stroke="#10a040" stroke-width="1.1"/><text transform="translate(582.9,306) rotate(-90)" font-family="Liberation Sans" font-size="7.2" font-weight="bold" fill="#1a2a40">TS4148</text><text transform="translate(602.9,293) rotate(-90)" font-family="Liberation Sans" font-size="7.2" font-weight="bold" fill="#1a2a40">D8</text><path d="M378 329.2 L501 329.2" fill="none" stroke="#10a040" stroke-width="1.1"/><path d="M530.7 329.2 L594 329.2" fill="none" stroke="#10a040" stroke-width="1.1"/><path d="M378.4 330 L381.4 327 L384.4 330 Z" fill="#10a040"/><path d="M408 330 L411 327 L414 330 Z" fill="#10a040"/><path d="M467.7 330 L470.7 327 L473.7 330 Z" fill="#10a040"/><path d="M557.7 330 L560.7 327 L563.7 330 Z" fill="#10a040"/><path d="M587.4 330 L590.4 327 L593.4 330 Z" fill="#10a040"/><path d="M419.8 323.5 L419.8 334.5 M430.8 323.5 L421 329 L430.8 334.5 Z" fill="none" stroke="#000" stroke-width="1.1"/><path d="M413 329.2 L419.8 329.2" fill="none" stroke="#e02020" stroke-width="1.1"/><text x="419" y="320.5" font-family="Liberation Sans" font-size="7.5" font-weight="bold" fill="#1a2a40">TS4148</text><rect x="176.5" y="370.5" width="62.5" height="56" fill="none" stroke="#000" stroke-width="2"/><circle cx="193" cy="399" r="7.5" fill="none" stroke="#000" stroke-width="1.1"/><path d="M193 384 L193 414" stroke="#000" stroke-width="1"/><path d="M193 392 L193 381 L230.5 381 L230.5 389 L263 389" fill="none" stroke="#10a040" stroke-width="1.1"/><path d="M193 414 L263 414" fill="none" stroke="#e8842a" stroke-width="1.1"/><path d="M190.5 417 L195.5 417 M193 414.5 L193 419.5" stroke="#000" stroke-width="1.1"/><rect x="184" y="392" width="3" height="1" fill="#000"/><path d="M206 400 Q209 394 212 399 Q214 402 216.5 399" fill="none" stroke="#000" stroke-width="1"/><text x="198.6" y="393" font-family="Liberation Sans" font-size="7.2" font-weight="bold" fill="#1a2a40">Sim</text><text x="200.5" y="410.5" font-family="Liberation Sans" font-size="7.2" font-weight="bold" fill="#1a2a40">9V</text><rect x="190" y="391.5" width="1.5" height="3" fill="#e02020"/><circle cx="250.5" cy="378.5" r="3" fill="none" stroke="#000" stroke-width="1"/><path d="M248.5 378.5 L252.5 378.5 M250.5 376.5 L250.5 380.5" stroke="#000" stroke-width="0.8"/><rect x="254.5" y="374.0" width="4.5" height="1.8" fill="#000"/><path d="M247.3 389 L253.7 389 M250.5 385.8 L250.5 392.2" stroke="#000" stroke-width="1.1"/><path d="M247.3 414 L253.7 414 M250.5 410.8 L250.5 417.2" stroke="#000" stroke-width="1.1"/><rect x="245.0" y="419.2" width="11" height="1.6" fill="#000"/></svg>
<div class="a" style="left:255px;top:336px;width:903px;height:582px;background:#c6dcec;border:1px solid #3a3a3a;border-radius:6px 6px 0 0"></div>
<div class="a" style="left:256px;top:337px;width:901px;height:30px;background:linear-gradient(#b6c9d7,#c3d7e6 60%,#c8deee);border-radius:5px 5px 0 0;border-top:1px solid #e8f0f8"></div>
<svg style="left:265px;top:350px" width="16" height="12" viewBox="0 0 16 12"><rect x="0" y="0" width="16" height="11" fill="#109040"/><rect x="0" y="10.5" width="16" height="1.5" fill="#111"/><rect x="1" y="1" width="3" height="2" fill="#3030a0"/><rect x="11" y="1" width="3" height="2" fill="#e0e030"/><rect x="5" y="4" width="6" height="1" fill="#d0d040"/><rect x="2" y="7" width="4" height="1" fill="#d0d040"/><rect x="9" y="6" width="2" height="4" fill="#e0e030"/><rect x="13" y="7" width="2" height="3" fill="#e8b020"/></svg>
<div class="t" style="left:285.00px;top:350.04px;font-size:12px;color:#7d848c;font-weight:normal;">2 Platine C:\Users\Mathias\AppData\Roaming\ibf\TarV19\discover\Projects\DicePCB.t3001</div>
<div class="a" style="left:1120px;top:346px;width:28px;height:17px;border:1px solid #7f94a8;border-radius:3px;background:linear-gradient(#b9cad8,#aabdcd)"></div>
<svg style="left:1130px;top:349px" width="12" height="10"><path d="M1.5 1 L10.5 9 M10.5 1 L1.5 9" stroke="#eee" stroke-width="3"/><path d="M1.5 1 L10.5 9 M10.5 1 L1.5 9" stroke="#666" stroke-width="1"/></svg>
<svg style="left:263px;top:367px;overflow:hidden" width="870" height="525" viewBox="263 367 870 525"><rect x="263" y="367" width="870" height="525" fill="#ededed"/><path d="M263 590 L340.5 667 L455.5 667 L491 703 L487 710 Q468 702 450 708 L442 715 L434.5 707 L415.3 707 L415.3 823 L438 823 L444.4 817 L444.4 860 L476 892 L263 892 Z" fill="#4e5b9c"/><path d="M331 367 L385 367 L379 373.5 L337 373.5 Z" fill="#4e5b9c"/><path d="M263 746.7 L299 746.7 L304 752 L304 828 L298 834 L290 834 L284.6 839 L284.6 892 L263 892 Z" fill="#ededed"/><path d="M386 707 L401.8 707 L401.8 758.4 L381 758.4 L381 712 Z" fill="#ededed"/><path d="M381 770.5 L401.8 770.5 L401.8 823 L386 823 L381 818 Z" fill="#ededed"/><rect x="263" y="367" width="54" height="52" fill="#272b7a"/><rect x="263" y="462" width="54" height="52" fill="#272b7a"/><rect x="263" y="760" width="27" height="59.7" fill="#272b7a"/><rect x="263" y="819" width="9" height="73" fill="#272b7a"/><rect x="394.2" y="719.9" width="7.6" height="87.7" fill="#272b7a"/><rect x="415.3" y="719.9" width="6.7" height="87.7" fill="#272b7a"/><rect x="756" y="838" width="88" height="70" rx="6" fill="#272b7a"/><rect x="1087" y="838" width="60" height="70" rx="6" fill="#272b7a"/><rect x="394" y="453.5" width="28" height="85.5" rx="14.0" ry="14.0" fill="#272b7a"/><rect x="451" y="453.5" width="28" height="86.5" rx="14.0" ry="14.0" fill="#272b7a"/><rect x="508" y="452" width="28" height="87" rx="14.0" ry="14.0" fill="#272b7a"/><rect x="564" y="452" width="28" height="87" rx="14.0" ry="14.0" fill="#272b7a"/><rect x="451" y="720.7" width="28" height="85.29999999999995" rx="14.0" ry="14.0" fill="#272b7a"/><rect x="508" y="722" width="28" height="85" rx="14.0" ry="14.0" fill="#272b7a"/><rect x="564" y="721.6" width="28" height="86.0" rx="14.0" ry="14.0" fill="#272b7a"/><path d="M317 393.5 L389 393.5 L428 354.5" fill="none" stroke="#272b7a" stroke-width="12.5" stroke-linejoin="miter" stroke-miterlimit="3"/><path d="M389 393.5 L407.8 412.3 L407.8 460" fill="none" stroke="#272b7a" stroke-width="12.5" stroke-linejoin="miter" stroke-miterlimit="3"/><path d="M465.2 460 L465.2 433.5 L484.5 414.5 L720 414.5" fill="none" stroke="#272b7a" stroke-width="12.5" stroke-linejoin="miter" stroke-miterlimit="3"/><path d="M578.5 530 L578.5 561.6 L1004 561.6 L1024 541.6 L1024 500" fill="none" stroke="#272b7a" stroke-width="12.5" stroke-linejoin="miter" stroke-miterlimit="3"/><path d="M408 530 L408 566 L452.5 610.5 L490 610.5 L578 698.5 L578 730" fill="none" stroke="#272b7a" stroke-width="12.5" stroke-linejoin="miter" stroke-miterlimit="3"/><path d="M522 530 L522 586 L613 677 L613 855 L642 884 L642 900" fill="none" stroke="#272b7a" stroke-width="12.5" stroke-linejoin="miter" stroke-miterlimit="3"/><path d="M613 855 L593.5 874.5 L490 874.5 L465.2 849.7 L465.2 800" fill="none" stroke="#272b7a" stroke-width="12.5" stroke-linejoin="miter" stroke-miterlimit="3"/><path d="M240 537.5 L349.5 647 L463.5 647 L522 705.5 L522 730" fill="none" stroke="#272b7a" stroke-width="12.5" stroke-linejoin="miter" stroke-miterlimit="3"/><rect x="1062" y="500" width="12.5" height="392" fill="#272b7a"/><rect x="1125" y="500" width="10" height="392" fill="#272b7a"/><path d="M706.5 367 L706.5 892 M263 632.5 L1133 632.5" stroke="#8c8c8c" stroke-width="1"/><rect x="706.5" y="632.5" width="233" height="152" fill="none" stroke="#1a1a1a" stroke-width="1"/></svg>
<div class="a" style="left:1133px;top:367px;width:17px;height:525px;background:#ececec"></div>
<div class="a" style="left:263px;top:892px;width:870px;height:17px;background:#ececec;border-top:1px solid #a0a0a0"></div>
<div class="a" style="left:1133px;top:892px;width:17px;height:17px;background:#ececec;border-top:1px solid #a0a0a0"></div>
<div class="a" style="left:1134px;top:617px;width:15px;height:17px;background:#c9c9c9"></div>
<div class="a" style="left:705px;top:893px;width:17px;height:15px;background:#c9c9c9"></div>
<svg style="left:0;top:0" width="1316" height="947"><path d="M1137.5 378.5 L1141.5 374.5 L1145.5 378.5" fill="none" stroke="#555" stroke-width="1.8"/><path d="M1137.5 882 L1141.5 886 L1145.5 882" fill="none" stroke="#555" stroke-width="1.8"/><path d="M273 897 L269 901 L273 905" fill="none" stroke="#555" stroke-width="1.8"/><path d="M1122.5 897 L1126.5 901 L1122.5 905" fill="none" stroke="#555" stroke-width="1.8"/></svg>
<div class="a" style="left:707px;top:105px;width:427px;height:406px;background:#f0f0f0;border:1px solid #e0506e;box-shadow:0 2px 16px rgba(30,60,60,0.16)"></div>
<div class="a" style="left:708px;top:106px;width:425px;height:25px;background:#fff"></div>
<div class="t" style="left:711.40px;top:111.84px;font-size:12px;color:#000;font-weight:normal;">Signal-Polygon anlegen</div>
<svg style="left:1111px;top:111px" width="13" height="13"><path d="M1 1 L12 12 M12 1 L1 12" stroke="#111" stroke-width="1.2"/></svg>
<div class="t" style="left:724.70px;top:148.73px;font-size:14.5px;color:#000;font-weight:bold;letter-spacing:0.05px">Für Masseflächen und andere Signal-Flächen</div>
<div class="a" style="left:717px;top:301px;width:229.5px;height:22px;background:#e2edf0"></div>
<div class="t" style="left:749.00px;top:306.34px;font-size:12px;color:#c9d3d7;font-weight:normal;">Fenster ausschneiden</div>
<div class="t" style="right:447.50px;top:192.37px;font-size:11.5px;color:#000;font-weight:normal;letter-spacing:-0.4px">Ebene:</div>
<div class="t" style="right:447.50px;top:223.87px;font-size:11.5px;color:#000;font-weight:normal;letter-spacing:-0.4px">Signal:</div>
<div class="t" style="right:447.50px;top:255.87px;font-size:11.5px;color:#000;font-weight:normal;letter-spacing:-0.4px">Linienbreite:</div>
<div class="t" style="right:447.50px;top:287.87px;font-size:11.5px;color:#000;font-weight:normal;letter-spacing:-0.4px">Raster-Abstand:</div>
<div class="t" style="right:447.50px;top:319.87px;font-size:11.5px;color:#000;font-weight:normal;letter-spacing:-0.4px">Rand-Abstand:</div>
<div class="t" style="right:447.50px;top:351.87px;font-size:11.5px;color:#000;font-weight:normal;letter-spacing:-0.4px">Rang:</div>
<div class="a" style="left:876px;top:187.6px;width:201px;height:20px;background:#e1e1e1;border:1px solid #adadad"></div>
<div class="t" style="left:880.00px;top:192.37px;font-size:11.5px;color:#000;font-weight:normal;letter-spacing:-0.4px">Kupfer oben (16)</div>
<div class="a" style="left:876px;top:219px;width:201px;height:20.5px;background:#fff;border:1px solid #7a7a7a"></div>
<div class="t" style="left:879.50px;top:223.87px;font-size:11.5px;color:#000;font-weight:normal;letter-spacing:-0.4px">GND</div>
<svg style="left:1063px;top:195.5px" width="10" height="6"><path d="M0.5 0.5 L5 5 L9.5 0.5" fill="none" stroke="#333" stroke-width="1.1"/></svg>
<svg style="left:1063px;top:227px" width="10" height="6"><path d="M0.5 0.5 L5 5 L9.5 0.5" fill="none" stroke="#333" stroke-width="1.1"/></svg>
<div class="a" style="left:876px;top:251px;width:65px;height:20.5px;background:#fff;border:1px solid #7a7a7a"></div>
<div class="t" style="left:879.50px;top:255.87px;font-size:11.5px;color:#000;font-weight:normal;letter-spacing:-0.4px">0,3</div>
<div class="t" style="left:948.00px;top:255.87px;font-size:11.5px;color:#000;font-weight:normal;letter-spacing:-0.4px">mm</div>
<div class="a" style="left:876px;top:283px;width:65px;height:20.5px;background:#fff;border:1px solid #7a7a7a"></div>
<div class="t" style="left:879.50px;top:287.87px;font-size:11.5px;color:#000;font-weight:normal;letter-spacing:-0.4px">0</div>
<div class="t" style="left:948.00px;top:287.87px;font-size:11.5px;color:#000;font-weight:normal;letter-spacing:-0.4px">mm</div>
<div class="a" style="left:876px;top:315px;width:65px;height:20.5px;background:#fff;border:1px solid #7a7a7a"></div>
<div class="t" style="left:879.50px;top:319.87px;font-size:11.5px;color:#000;font-weight:normal;letter-spacing:-0.4px">0,15</div>
<div class="t" style="left:948.00px;top:319.87px;font-size:11.5px;color:#000;font-weight:normal;letter-spacing:-0.4px">mm</div>
<div class="t" style="left:988.40px;top:287.87px;font-size:11.5px;color:#000;font-weight:normal;letter-spacing:-0.4px">0 = vollflächig füllen</div>
<div class="a" style="left:876px;top:346.8px;width:25px;height:20.6px;background:#fff;border:1px solid #7a7a7a"></div>
<div class="t" style="left:879.50px;top:351.27px;font-size:11.5px;color:#000;font-weight:normal;">1</div>
<div class="a" style="left:902.5px;top:347px;width:13px;height:10px;background:#e8e8e8;border:1px solid #adadad"></div>
<div class="a" style="left:902.5px;top:357px;width:13px;height:10px;background:#e8e8e8;border:1px solid #adadad"></div>
<svg style="left:905px;top:349px" width="8" height="16"><path d="M1 4.5 L4 1.5 L7 4.5 Z M1 11 L4 14 L7 11 Z" fill="#222"/></svg>
<div class="a" style="left:875.8px;top:381px;width:13px;height:13px;background:#fff;border:1px solid #333"></div>
<svg style="left:876px;top:381px" width="13" height="13"><path d="M2.5 6.5 L5 9.5 L10.5 3" fill="none" stroke="#111" stroke-width="1.5"/></svg>
<div class="t" style="left:892.20px;top:382.27px;font-size:11.5px;color:#000;font-weight:normal;letter-spacing:-0.4px">Wärmefallen erzeugen</div>
<div class="a" style="left:875.8px;top:405px;width:13px;height:13px;background:#fff;border:1px solid #333"></div>
<svg style="left:876px;top:405px" width="13" height="13"><path d="M2.5 6.5 L5 9.5 L10.5 3" fill="none" stroke="#111" stroke-width="1.5"/></svg>
<div class="t" style="left:892.20px;top:406.27px;font-size:11.5px;color:#000;font-weight:normal;letter-spacing:-0.4px">Inseln entfernen</div>
<div class="a" style="left:875.8px;top:429px;width:13px;height:13px;background:#fff;border:1px solid #333"></div>
<svg style="left:876px;top:429px" width="13" height="13"><path d="M2.5 6.5 L5 9.5 L10.5 3" fill="none" stroke="#111" stroke-width="1.5"/></svg>
<div class="t" style="left:892.20px;top:430.27px;font-size:11.5px;color:#000;font-weight:normal;letter-spacing:-0.4px">Sofort füllen</div>
<div class="a" style="left:725px;top:460.4px;width:73px;height:22.3px;background:#e1e1e1;border:1px solid #adadad"></div>
<div class="t" style="left:561.50px;width:400px;text-align:center;top:465.77px;font-size:11.5px;color:#000;font-weight:normal;letter-spacing:-0.4px">Hilfe</div>
<div class="a" style="left:808.4px;top:460.4px;width:104.1px;height:22.3px;background:#e1e1e1;border:1px solid #adadad"></div>
<div class="t" style="left:660.45px;width:400px;text-align:center;top:465.77px;font-size:11.5px;color:#000;font-weight:normal;letter-spacing:-0.4px">Eine Frage...</div>
<div class="a" style="left:941px;top:460.4px;width:72.5px;height:22.3px;background:#e1e1e1;border:2px solid #1a6cc0"></div>
<div class="t" style="left:777.25px;width:400px;text-align:center;top:465.77px;font-size:11.5px;color:#000;font-weight:normal;letter-spacing:-0.4px">Ok</div>
<div class="a" style="left:1029px;top:460.4px;width:70.5px;height:22.3px;background:#e1e1e1;border:1px solid #adadad"></div>
<div class="t" style="left:864.25px;width:400px;text-align:center;top:465.77px;font-size:11.5px;color:#000;font-weight:normal;letter-spacing:-0.4px">Abbruch</div>
<div class="a" style="left:1169px;top:81px;width:145px;height:836px;background-color:#10151c"></div>
<div class="a" style="left:1169px;top:102px;width:145px;height:355px;background-image:radial-gradient(circle,rgba(95,105,120,0.38) 0.7px,transparent 1.3px),radial-gradient(circle,rgba(95,105,120,0.38) 0.7px,transparent 1.3px);background-size:6.3px 6.3px;background-position:0 0,3.15px 3.15px"></div>
<div class="a" style="left:1169px;top:457px;width:145px;height:460px;background-image:repeating-linear-gradient(35deg,rgba(110,125,145,0.13) 0 1.2px,transparent 1.2px 7px),repeating-linear-gradient(-40deg,rgba(110,125,145,0.07) 0 1px,transparent 1px 9px)"></div>
<div class="a" style="left:1313.7px;top:81px;width:1.3px;height:846px;background:#a0a0a0"></div>
<div class="a" style="left:1169px;top:81px;width:145px;height:22px;background:#13113a"></div>
<div class="a" style="left:1169px;top:917px;width:145px;height:1px;background:#fafafa"></div>
<div class="a" style="left:1169px;top:925px;width:146px;height:2px;background:#9a9a9a"></div>
<div class="a" style="left:1172.3px;top:85px;width:139.7px;height:13px;background:linear-gradient(#d0dcef,#b0bed8 45%,#a2b2d0 60%,#b4c2dc);border:1px solid #dde6f4;border-right-color:#56607a;border-bottom-color:#56607a;box-shadow:0 0 0 1px #2a3048"></div>
<svg style="left:1175px;top:89.5px" width="9" height="5"><path d="M0.5 0.5 L7.5 0.5 L4 4.5 Z" fill="#1a2a88"/></svg>
<svg style="left:1300px;top:89.5px" width="9" height="5"><path d="M0.5 0.5 L7.5 0.5 L4 4.5 Z" fill="#1a2a88"/></svg>
<div class="a" style="left:1187px;top:88px;width:112px;height:7px;background-image:repeating-conic-gradient(#3a4a98 0 25%,#dfe6f6 0 50%);background-size:2.6px 2.6px;opacity:0.9"></div>
<div class="a" style="left:1176px;top:108px;width:105px;height:20.5px;background:#fff;border:1px solid #9aa"></div>
<div class="t" style="left:1179.00px;top:112.34px;font-size:12px;color:#b8b8b8;font-weight:normal;">GND</div>
<svg style="left:1286px;top:108px" width="22" height="22"><path d="M3 20.5 L4 11 L5.5 3 L9.5 3 L10 11 L10.5 20.5 Z M11.5 20.5 L12 11 L12.5 3 L16.5 3 L18 11 L19 20.5 Z" fill="none" stroke="#fff" stroke-width="1.5"/><path d="M3.5 12 L18.5 12 M9.5 7 L12.5 7" stroke="#fff" stroke-width="1.4"/></svg>
<div class="a" style="left:1172.3px;top:139px;width:139.7px;height:14px;background:linear-gradient(#d0dcef,#b0bed8 45%,#a2b2d0 60%,#b4c2dc);border:1px solid #dde6f4;border-right-color:#56607a;border-bottom-color:#56607a;box-shadow:0 0 0 1px #2a3048"></div>
<svg style="left:1175px;top:144.0px" width="9" height="5"><path d="M0.5 0.5 L7.5 0.5 L4 4.5 Z" fill="#1a2a88"/></svg>
<svg style="left:1300px;top:144.0px" width="9" height="5"><path d="M0.5 0.5 L7.5 0.5 L4 4.5 Z" fill="#1a2a88"/></svg>
<div class="a" style="left:1187px;top:142px;width:10px;height:8px;background-image:repeating-conic-gradient(#3a4a98 0 25%,#dfe6f6 0 50%);background-size:2.6px 2.6px;opacity:0.9"></div>
<div class="a" style="left:1286px;top:142px;width:10px;height:8px;background-image:repeating-conic-gradient(#3a4a98 0 25%,#dfe6f6 0 50%);background-size:2.6px 2.6px;opacity:0.9"></div>
<div class="t" style="left:1041.50px;width:400px;text-align:center;top:140.43px;font-size:11.3px;color:#000;font-weight:normal;letter-spacing:-0.15px">Einstellungen</div>
<div class="a" style="left:1177.8px;top:157.9px;width:30.2px;height:30.4px;border-radius:4px;background:linear-gradient(#6a6a6a,#555 40%,#474747);box-shadow:inset 1px 1px 0 #888,inset -1px -1px 0 #2a2a2a,1px 1px 1px #000"></div>
<div class="a" style="left:1180px;top:191px;width:11px;height:10.7px;background:#fff"></div>
<div class="t" style="left:1195.00px;top:190.84px;font-size:12px;color:#f08a30;font-weight:normal;letter-spacing:-0.5px">Anschlüsse auch</div>
<div class="a" style="left:1177px;top:205.2px;width:129px;height:1.8px;background:#e8e8e8"></div>
<div class="a" style="left:1177.8px;top:209.8px;width:30.7px;height:30.8px;border-radius:4px;background:linear-gradient(#6a6a6a,#555 40%,#474747);box-shadow:inset 1px 1px 0 #888,inset -1px -1px 0 #2a2a2a,1px 1px 1px #000"></div>
<div class="a" style="left:1210.5px;top:209.8px;width:30.5px;height:30.8px;border-radius:4px;background:linear-gradient(#6a6a6a,#555 40%,#474747);box-shadow:inset 1px 1px 0 #888,inset -1px -1px 0 #2a2a2a,1px 1px 1px #000"></div>
<div class="a" style="left:1243.4px;top:209.8px;width:31.4px;height:30.8px;border-radius:4px;background:linear-gradient(#6a6a6a,#555 40%,#474747);box-shadow:inset 1px 1px 0 #888,inset -1px -1px 0 #2a2a2a,1px 1px 1px #000"></div>
<div class="a" style="left:1177px;top:244px;width:129px;height:1.8px;background:#e8e8e8"></div>
<div class="a" style="left:1177.7px;top:249px;width:30.9px;height:30px;border-radius:4px;background:linear-gradient(#6a6a6a,#555 40%,#474747);box-shadow:inset 1px 1px 0 #888,inset -1px -1px 0 #2a2a2a,1px 1px 1px #000"></div>
<div class="a" style="left:1177px;top:282.2px;width:129px;height:1.8px;background:#e8e8e8"></div>
<div class="a" style="left:1177.7px;top:318.7px;width:30.9px;height:30.9px;border-radius:4px;background:linear-gradient(#6a6a6a,#555 40%,#474747);box-shadow:inset 1px 1px 0 #888,inset -1px -1px 0 #2a2a2a,1px 1px 1px #000"></div>
<svg style="left:0;top:0" width="1316" height="947"><path d="M1183.5 161.5 L1183.5 183.5 M1202 175 L1202 183.5" stroke="#bbb" stroke-width="1"/><path d="M1187 165 L1203 165" stroke="#bbb" stroke-width="1"/><path d="M1183 174.5 L1203 174.5" stroke="#e03030" stroke-width="2.8"/><path transform="translate(1190,174.5) scale(1.05)" d="M0 0 L0 12 L3 9.3 L5.2 14 L7.2 13 L5 8.5 L9 8.5 Z" fill="#fff" stroke="#111" stroke-width="0.8"/><path d="M1215 161.5 L1215 183.5" stroke="#bbb" stroke-width="1"/><path d="M1219 165 L1234 165" stroke="#bbb" stroke-width="1"/><path d="M1215 174.5 L1235 174.5 L1235 183.5" fill="none" stroke="#e03030" stroke-width="2.8"/><path transform="translate(1222,174.5) scale(1.05)" d="M0 0 L0 12 L3 9.3 L5.2 14 L7.2 13 L5 8.5 L9 8.5 Z" fill="#fff" stroke="#111" stroke-width="0.8"/><path d="M1247 161 L1247 184 M1247 174.5 L1267 174.5 L1267 184" fill="none" stroke="#e03030" stroke-width="2.8"/><path d="M1251 165 L1266 165" stroke="#bbb" stroke-width="1"/><path transform="translate(1254,174.5) scale(1.05)" d="M0 0 L0 12 L3 9.3 L5.2 14 L7.2 13 L5 8.5 L9 8.5 Z" fill="#fff" stroke="#111" stroke-width="0.8"/><path d="M1279 161 L1279 184 M1279 174.5 L1299 174.5 L1299 184 M1283 165.5 L1299 165.5" fill="none" stroke="#e03030" stroke-width="2.8"/><path transform="translate(1286,174.5) scale(1.05)" d="M0 0 L0 12 L3 9.3 L5.2 14 L7.2 13 L5 8.5 L9 8.5 Z" fill="#fff" stroke="#111" stroke-width="0.8"/><path d="M1192.5 215 L1192.5 232 M1184 223.5 L1201 223.5" stroke="#fff" stroke-width="2.6"/><path transform="translate(1196,226) scale(1.05)" d="M0 0 L0 12 L3 9.3 L5.2 14 L7.2 13 L5 8.5 L9 8.5 Z" fill="#fff" stroke="#111" stroke-width="0.8"/><rect x="1217.5" y="217.5" width="16" height="6.5" fill="none" stroke="#fff" stroke-width="1.3"/><path d="M1214 220.8 L1217.5 220.8 M1233.5 220.8 L1237 220.8" stroke="#e03030" stroke-width="1.6"/><path transform="translate(1225,226) scale(1.05)" d="M0 0 L0 12 L3 9.3 L5.2 14 L7.2 13 L5 8.5 L9 8.5 Z" fill="#fff" stroke="#111" stroke-width="0.8"/><rect x="1247.5" y="213.5" width="22" height="20" fill="none" stroke="#fff" stroke-width="1" stroke-dasharray="1.6 1.2"/><rect x="1253.5" y="216" width="7" height="4" fill="none" stroke="#fff" stroke-width="0.9"/><path d="M1262 217.5 L1266 217.5 L1266 225 M1250 227.5 L1255 227.5 M1262 229 L1266 229" stroke="#10a040" stroke-width="1.2"/><text x="1254.5" y="231" font-family="Liberation Sans" font-size="7" fill="#fff">K</text><path transform="translate(1264,226) scale(1.05)" d="M0 0 L0 12 L3 9.3 L5.2 14 L7.2 13 L5 8.5 L9 8.5 Z" fill="#fff" stroke="#111" stroke-width="0.8"/><path d="M1203 252 L1190 264.5 L1203 276.5" fill="none" stroke="#f0e020" stroke-width="1.4"/><path d="M1190 264.5 L1181.5 255.5" stroke="#10a040" stroke-width="1.4"/><path d="M1181 254.5 L1186 255 L1181.5 259 Z" fill="#10a040"/><path d="M1204 253 L1204 276" stroke="#888" stroke-width="1.2" stroke-dasharray="2 1"/><path d="M1235 252.5 Q1223 253 1223 264.5 Q1223 276 1235 276" fill="none" stroke="#f0e020" stroke-width="1.8"/><path d="M1223 264.5 L1214 256" stroke="#10a040" stroke-width="1.4"/><path d="M1213.5 255 L1218.5 255.5 L1214 259.5 Z" fill="#10a040"/><path d="M1236 252 L1236 276" stroke="#888" stroke-width="1.3" stroke-dasharray="2 1"/><path d="M1266.5 252.5 Q1256 264 1256 272 Q1257 276 1266.5 275.5" fill="none" stroke="#f0e020" stroke-width="1.8"/><path d="M1256.5 265 L1247.5 257" stroke="#10a040" stroke-width="1.4"/><path d="M1247 256 L1252 256.5 L1247.5 260.5 Z" fill="#10a040"/><path d="M1268 252 L1268 276" stroke="#888" stroke-width="1.3" stroke-dasharray="2 1"/><path d="M1182.5 296.5 L1203.5 296.5 L1203.5 307.5" fill="none" stroke="#fff" stroke-width="1.1"/><rect x="1181.0" y="295.0" width="3" height="3" fill="#fff"/><rect x="1202.0" y="306.0" width="3" height="3" fill="#fff"/><path d="M1214.5 296.5 L1214.5 307.5 L1235.5 307.5" fill="none" stroke="#fff" stroke-width="1.1"/><rect x="1213.0" y="295.0" width="3" height="3" fill="#fff"/><rect x="1234.0" y="306.0" width="3" height="3" fill="#fff"/><path d="M1246.5 296.5 L1257.5 307.5 L1267.5 307.5" fill="none" stroke="#fff" stroke-width="1.1"/><rect x="1245.0" y="295.0" width="3" height="3" fill="#fff"/><rect x="1266.0" y="306.0" width="3" height="3" fill="#fff"/><path d="M1182.5 328.5 L1192 328.5 L1203.5 339.5" fill="none" stroke="#fff" stroke-width="1.1"/><rect x="1181.0" y="327.0" width="3" height="3" fill="#fff"/><rect x="1202.0" y="338.0" width="3" height="3" fill="#fff"/><path d="M1214.5 328.5 L1219 328.5 L1219 332 L1224 332 L1224 330 L1230 330 L1230 340 L1235.5 340" fill="none" stroke="#bbb" stroke-width="1.1"/><rect x="1213.0" y="327.0" width="3" height="3" fill="#bbb"/><rect x="1234.0" y="338.5" width="3" height="3" fill="#bbb"/><path d="M1246.5 328.5 L1267.5 339.5" fill="none" stroke="#fff" stroke-width="1.3"/><rect x="1245.0" y="327.0" width="3" height="3" fill="#fff"/><rect x="1266.0" y="338.0" width="3" height="3" fill="#fff"/></svg>
<div class="t" style="left:1181.60px;top:355.87px;font-size:12.2px;color:#f08a30;font-weight:normal;letter-spacing:-0.6px">Weitere Optionen</div>
<div class="a" style="left:1172.3px;top:378px;width:139.7px;height:13.600000000000023px;background:linear-gradient(#d0dcef,#b0bed8 45%,#a2b2d0 60%,#b4c2dc);border:1px solid #dde6f4;border-right-color:#56607a;border-bottom-color:#56607a;box-shadow:0 0 0 1px #2a3048"></div>
<svg style="left:1175px;top:382.8px" width="9" height="5"><path d="M0.5 0.5 L7.5 0.5 L4 4.5 Z" fill="#1a2a88"/></svg>
<svg style="left:1300px;top:382.8px" width="9" height="5"><path d="M0.5 0.5 L7.5 0.5 L4 4.5 Z" fill="#1a2a88"/></svg>
<div class="a" style="left:1187px;top:381px;width:10px;height:7.600000000000023px;background-image:repeating-conic-gradient(#3a4a98 0 25%,#dfe6f6 0 50%);background-size:2.6px 2.6px;opacity:0.9"></div>
<div class="a" style="left:1286px;top:381px;width:10px;height:7.600000000000023px;background-image:repeating-conic-gradient(#3a4a98 0 25%,#dfe6f6 0 50%);background-size:2.6px 2.6px;opacity:0.9"></div>
<div class="t" style="left:1041.50px;width:400px;text-align:center;top:379.23px;font-size:11.3px;color:#000;font-weight:normal;letter-spacing:-0.15px">Ebenen</div>
<div class="t" style="left:1172.40px;top:400.57px;font-size:11.5px;color:#f08a30;font-weight:normal;letter-spacing:-0.3px">Ebene für Linien, Kreise etc.:</div>
<div class="a" style="left:1172.9px;top:412px;width:137.3px;height:15.7px;background:#7c7c7c"></div>
<div class="t" style="left:1041.50px;width:400px;text-align:center;top:414.34px;font-size:12px;color:#fff;font-weight:normal;letter-spacing:-0.2px">7 Bestückung unten</div>
<div class="t" style="left:1172.40px;top:432.27px;font-size:11.5px;color:#f08a30;font-weight:normal;letter-spacing:-0.3px">Ebene für Leiterbahnen:</div>
<div class="a" style="left:1172.9px;top:444px;width:137.3px;height:15.7px;background:#e05a2a"></div>
<div class="t" style="left:1041.50px;width:400px;text-align:center;top:446.34px;font-size:12px;color:#fff;font-weight:normal;letter-spacing:-0.2px">16 Kupfer oben</div>
<div class="a" style="left:1170px;top:607.3px;width:51px;height:21.2px;background:#e05a2a"></div>
<div class="a" style="left:1170px;top:769.3px;width:51px;height:21.2px;background:#7c7c7c"></div>
<div class="a" style="left:1195px;top:464.3px;width:22.8px;height:16px;background:#8b4a1c;border:2px solid #fff"></div>
<div class="t" style="left:1178.30px;top:465.33px;font-size:13.2px;color:#fff;font-weight:bold;letter-spacing:-0.3px">24</div>
<div class="a" style="left:1245px;top:464.3px;width:22.8px;height:16px;background:#0e9a98;border:2px solid #fff"></div>
<div class="t" style="left:1228.80px;top:465.33px;font-size:13.2px;color:#fff;font-weight:bold;letter-spacing:-0.3px">49</div>
<div class="a" style="left:1195px;top:482.3px;width:22.8px;height:16px;background:#e88880;border:2px solid #fff"></div>
<div class="t" style="left:1178.30px;top:483.33px;font-size:13.2px;color:#fff;font-weight:bold;letter-spacing:-0.3px">23</div>
<div class="a" style="left:1245px;top:482.3px;width:22.8px;height:16px;background:#0e9a98;border:2px solid #fff"></div>
<div class="t" style="left:1228.80px;top:483.33px;font-size:13.2px;color:#fff;font-weight:bold;letter-spacing:-0.3px">48</div>
<div class="a" style="left:1195px;top:500.3px;width:22.8px;height:16px;background:#8c8c8c;border:2px solid #fff"></div>
<div class="t" style="left:1178.30px;top:501.33px;font-size:13.2px;color:#fff;font-weight:bold;letter-spacing:-0.3px">22</div>
<div class="a" style="left:1245px;top:500.3px;width:22.8px;height:16px;background:#0e9a98;border:2px solid #fff"></div>
<div class="t" style="left:1228.80px;top:501.33px;font-size:13.2px;color:#fff;font-weight:bold;letter-spacing:-0.3px">47</div>
<div class="a" style="left:1195px;top:518.3px;width:22.8px;height:16px;background:#000;border:2px solid #fff"></div>
<div class="t" style="left:1178.30px;top:519.33px;font-size:13.2px;color:#fff;font-weight:bold;letter-spacing:-0.3px">21</div>
<div class="a" style="left:1245px;top:518.3px;width:22.8px;height:16px;background:#0e9a98;border:2px solid #fff"></div>
<div class="t" style="left:1228.80px;top:519.33px;font-size:13.2px;color:#fff;font-weight:bold;letter-spacing:-0.3px">46</div>
<div class="a" style="left:1195px;top:536.3px;width:22.8px;height:16px;background:#8c2a8c;border:2px solid #fff"></div>
<div class="t" style="left:1178.30px;top:537.33px;font-size:13.2px;color:#fff;font-weight:bold;letter-spacing:-0.3px">20</div>
<div class="a" style="left:1245px;top:536.3px;width:22.8px;height:16px;background:#0e9a98;border:2px solid #fff"></div>
<div class="t" style="left:1228.80px;top:537.33px;font-size:13.2px;color:#fff;font-weight:bold;letter-spacing:-0.3px">45</div>
<div class="a" style="left:1195px;top:554.3px;width:22.8px;height:16px;background:#bcbcbc;border:2px solid #fff"></div>
<div class="t" style="left:1178.30px;top:555.33px;font-size:13.2px;color:#fff;font-weight:bold;letter-spacing:-0.3px">19</div>
<div class="a" style="left:1245px;top:554.3px;width:22.8px;height:16px;background:#0e9a98;border:2px solid #fff"></div>
<div class="t" style="left:1228.80px;top:555.33px;font-size:13.2px;color:#fff;font-weight:bold;letter-spacing:-0.3px">44</div>
<div class="a" style="left:1195px;top:572.3px;width:22.8px;height:16px;background:#10a050;border:2px solid #fff"></div>
<div class="t" style="left:1178.30px;top:573.33px;font-size:13.2px;color:#fff;font-weight:bold;letter-spacing:-0.3px">18</div>
<div class="a" style="left:1245px;top:572.3px;width:22.8px;height:16px;background:#0e9a98;border:2px solid #fff"></div>
<div class="t" style="left:1228.80px;top:573.33px;font-size:13.2px;color:#fff;font-weight:bold;letter-spacing:-0.3px">43</div>
<div class="a" style="left:1195px;top:590.3px;width:22.8px;height:16px;background:#8b4a1c;border:2px solid #fff"></div>
<div class="t" style="left:1178.30px;top:591.33px;font-size:13.2px;color:#fff;font-weight:bold;letter-spacing:-0.3px">17</div>
<div class="a" style="left:1245px;top:590.3px;width:22.8px;height:16px;background:#0e9a98;border:2px solid #fff"></div>
<div class="t" style="left:1228.80px;top:591.33px;font-size:13.2px;color:#fff;font-weight:bold;letter-spacing:-0.3px">42</div>
<div class="a" style="left:1195px;top:608.3px;width:22.8px;height:16px;background:#2a2a88;border:2px solid #fff"></div>
<div class="t" style="left:1178.30px;top:609.33px;font-size:13.2px;color:#fff;font-weight:bold;letter-spacing:-0.3px">16</div>
<div class="a" style="left:1245px;top:608.3px;width:22.8px;height:16px;background:#0e9a98;border:2px solid #fff"></div>
<div class="t" style="left:1228.80px;top:609.33px;font-size:13.2px;color:#fff;font-weight:bold;letter-spacing:-0.3px">41</div>
<div class="a" style="left:1195px;top:626.3px;width:22.8px;height:16px;background:#fff;border:2px solid #fff"></div>
<div class="t" style="left:1178.30px;top:627.33px;font-size:13.2px;color:#fff;font-weight:bold;letter-spacing:-0.3px">15</div>
<div class="a" style="left:1245px;top:626.3px;width:22.8px;height:16px;background:#0e9a98;border:2px solid #fff"></div>
<div class="t" style="left:1228.80px;top:627.33px;font-size:13.2px;color:#fff;font-weight:bold;letter-spacing:-0.3px">40</div>
<div class="a" style="left:1195px;top:644.3px;width:22.8px;height:16px;background:#2a2a88;border:2px solid #fff"></div>
<div class="t" style="left:1178.30px;top:645.33px;font-size:13.2px;color:#fff;font-weight:bold;letter-spacing:-0.3px">14</div>
<div class="a" style="left:1245px;top:644.3px;width:22.8px;height:16px;background:#0e9a98;border:2px solid #fff"></div>
<div class="t" style="left:1228.80px;top:645.33px;font-size:13.2px;color:#fff;font-weight:bold;letter-spacing:-0.3px">39</div>
<div class="a" style="left:1195px;top:662.3px;width:22.8px;height:16px;background:#8b4a1c;border:2px solid #fff"></div>
<div class="t" style="left:1178.30px;top:663.33px;font-size:13.2px;color:#fff;font-weight:bold;letter-spacing:-0.3px">13</div>
<div class="a" style="left:1245px;top:662.3px;width:22.8px;height:16px;background:#0e9a98;border:2px solid #fff"></div>
<div class="t" style="left:1228.80px;top:663.33px;font-size:13.2px;color:#fff;font-weight:bold;letter-spacing:-0.3px">38</div>
<div class="a" style="left:1195px;top:680.3px;width:22.8px;height:16px;background:#fff;border:2px solid #fff"></div>
<div class="t" style="left:1178.30px;top:681.33px;font-size:13.2px;color:#fff;font-weight:bold;letter-spacing:-0.3px">12</div>
<div class="a" style="left:1245px;top:680.3px;width:22.8px;height:16px;background:#0e9a98;border:2px solid #fff"></div>
<div class="t" style="left:1228.80px;top:681.33px;font-size:13.2px;color:#fff;font-weight:bold;letter-spacing:-0.3px">37</div>
<div class="a" style="left:1195px;top:698.3px;width:22.8px;height:16px;background:#8b4a1c;border:2px solid #fff"></div>
<div class="t" style="left:1178.30px;top:699.33px;font-size:13.2px;color:#fff;font-weight:bold;letter-spacing:-0.3px">11</div>
<div class="a" style="left:1245px;top:698.3px;width:22.8px;height:16px;background:#0e9a98;border:2px solid #fff"></div>
<div class="t" style="left:1228.80px;top:699.33px;font-size:13.2px;color:#fff;font-weight:bold;letter-spacing:-0.3px">36</div>
<div class="a" style="left:1195px;top:716.3px;width:22.8px;height:16px;background:#10a050;border:2px solid #fff"></div>
<div class="t" style="left:1178.30px;top:717.33px;font-size:13.2px;color:#fff;font-weight:bold;letter-spacing:-0.3px">10</div>
<div class="a" style="left:1245px;top:716.3px;width:22.8px;height:16px;background:#0e9a98;border:2px solid #fff"></div>
<div class="t" style="left:1228.80px;top:717.33px;font-size:13.2px;color:#fff;font-weight:bold;letter-spacing:-0.3px">35</div>
<div class="a" style="left:1195px;top:734.3px;width:22.8px;height:16px;background:#fff;border:2px solid #fff"></div>
<div class="t" style="left:1178.30px;top:735.33px;font-size:13.2px;color:#fff;font-weight:bold;letter-spacing:-0.3px">9</div>
<div class="a" style="left:1245px;top:734.3px;width:22.8px;height:16px;background:#0e9a98;border:2px solid #fff"></div>
<div class="t" style="left:1228.80px;top:735.33px;font-size:13.2px;color:#fff;font-weight:bold;letter-spacing:-0.3px">34</div>
<div class="a" style="left:1195px;top:752.3px;width:22.8px;height:16px;background:#10a050;border:2px solid #fff"></div>
<div class="t" style="left:1178.30px;top:753.33px;font-size:13.2px;color:#fff;font-weight:bold;letter-spacing:-0.3px">8</div>
<div class="a" style="left:1245px;top:752.3px;width:22.8px;height:16px;background:#0e9a98;border:2px solid #fff"></div>
<div class="t" style="left:1228.80px;top:753.33px;font-size:13.2px;color:#fff;font-weight:bold;letter-spacing:-0.3px">33</div>
<div class="a" style="left:1195px;top:770.3px;width:22.8px;height:16px;background:#0c9898;border:2px solid #fff"></div>
<div class="t" style="left:1178.30px;top:771.33px;font-size:13.2px;color:#fff;font-weight:bold;letter-spacing:-0.3px">7</div>
<div class="a" style="left:1245px;top:770.3px;width:22.8px;height:16px;background:#0e9a98;border:2px solid #fff"></div>
<div class="t" style="left:1228.80px;top:771.33px;font-size:13.2px;color:#fff;font-weight:bold;letter-spacing:-0.3px">32</div>
<div class="a" style="left:1195px;top:788.3px;width:22.8px;height:16px;background:#8c2a8c;border:2px solid #fff"></div>
<div class="t" style="left:1178.30px;top:789.33px;font-size:13.2px;color:#fff;font-weight:bold;letter-spacing:-0.3px">6</div>
<div class="a" style="left:1245px;top:788.3px;width:22.8px;height:16px;background:#000;border:2px solid #fff"></div>
<div class="t" style="left:1228.80px;top:789.33px;font-size:13.2px;color:#fff;font-weight:bold;letter-spacing:-0.3px">31</div>
<div class="a" style="left:1195px;top:806.3px;width:22.8px;height:16px;background:#bcbcbc;border:2px solid #fff"></div>
<div class="t" style="left:1178.30px;top:807.33px;font-size:13.2px;color:#fff;font-weight:bold;letter-spacing:-0.3px">5</div>
<div class="a" style="left:1245px;top:806.3px;width:22.8px;height:16px;background:#e88880;border:2px solid #fff"></div>
<div class="t" style="left:1228.80px;top:807.33px;font-size:13.2px;color:#fff;font-weight:bold;letter-spacing:-0.3px">30</div>
<div class="a" style="left:1195px;top:824.3px;width:22.8px;height:16px;background:#10a050;border:2px solid #fff"></div>
<div class="t" style="left:1178.30px;top:825.33px;font-size:13.2px;color:#fff;font-weight:bold;letter-spacing:-0.3px">4</div>
<div class="a" style="left:1245px;top:824.3px;width:22.8px;height:16px;background:#8c8c8c;border:2px solid #fff"></div>
<div class="t" style="left:1228.80px;top:825.33px;font-size:13.2px;color:#fff;font-weight:bold;letter-spacing:-0.3px">29</div>
<div class="a" style="left:1195px;top:842.3px;width:22.8px;height:16px;background:#8b4a1c;border:2px solid #fff"></div>
<div class="t" style="left:1178.30px;top:843.33px;font-size:13.2px;color:#fff;font-weight:bold;letter-spacing:-0.3px">3</div>
<div class="a" style="left:1245px;top:842.3px;width:22.8px;height:16px;background:#000;border:2px solid #fff"></div>
<div class="t" style="left:1228.80px;top:843.33px;font-size:13.2px;color:#fff;font-weight:bold;letter-spacing:-0.3px">28</div>
<div class="a" style="left:1195px;top:860.3px;width:22.8px;height:16px;background:#e02020;border:2px solid #fff"></div>
<div class="t" style="left:1178.30px;top:861.33px;font-size:13.2px;color:#fff;font-weight:bold;letter-spacing:-0.3px">2</div>
<div class="a" style="left:1245px;top:860.3px;width:22.8px;height:16px;background:#10a050;border:2px solid #fff"></div>
<div class="t" style="left:1228.80px;top:861.33px;font-size:13.2px;color:#fff;font-weight:bold;letter-spacing:-0.3px">27</div>
<div class="a" style="left:1195px;top:878.3px;width:22.8px;height:16px;background:#fff;border:2px solid #fff"></div>
<div class="t" style="left:1178.30px;top:879.33px;font-size:13.2px;color:#fff;font-weight:bold;letter-spacing:-0.3px">1</div>
<div class="a" style="left:1245px;top:878.3px;width:22.8px;height:16px;background:#000;border:2px solid #fff"></div>
<div class="t" style="left:1228.80px;top:879.33px;font-size:13.2px;color:#fff;font-weight:bold;letter-spacing:-0.3px">26</div>
<div class="a" style="left:1195px;top:896.3px;width:22.8px;height:16px;background:#e02020;border:2px solid #fff"></div>
<div class="t" style="left:1178.30px;top:897.33px;font-size:13.2px;color:#fff;font-weight:bold;letter-spacing:-0.3px">0</div>
<div class="a" style="left:1245px;top:896.3px;width:22.8px;height:16px;background:#8b4a1c;border:2px solid #fff"></div>
<div class="t" style="left:1228.80px;top:897.33px;font-size:13.2px;color:#fff;font-weight:bold;letter-spacing:-0.3px">25</div>
<svg style="left:1200px;top:610.3px" width="14" height="13"><path d="M2 6.5 L6 11 L12 1.5" fill="none" stroke="#fff" stroke-width="2.4"/></svg>
<div class="a" style="left:1273px;top:464.3px;width:15px;height:20.4px;background:#d8d8d8;border:1px solid #f4f4f4;border-right-color:#888;border-bottom-color:#888"></div>
<svg style="left:1277px;top:470px" width="8" height="9"><path d="M1.5 1 L5.5 4.5 L1.5 8" fill="none" stroke="#000" stroke-width="1.5"/></svg>
<div class="a" style="left:1277.2px;top:496px;width:33px;height:15px;background:#d8d8d8;border:1px solid #f4f4f4;border-right-color:#888;border-bottom-color:#888"></div>
<svg style="left:1284px;top:499px" width="20" height="10"><path d="M0.5 1 L4.5 5 L8.5 1 L12.5 5 L16.5 1 M0.5 8.5 L4.5 4.5 L8.5 8.5 L12.5 4.5 L16.5 8.5" fill="none" stroke="#000" stroke-width="0.9"/><rect x="17.5" y="2.5" width="1.3" height="1.3" fill="#000"/><rect x="17.5" y="6.3" width="1.3" height="1.3" fill="#000"/></svg>
<div class="a" style="left:1277.2px;top:514px;width:33px;height:15px;background:#d8d8d8;border:1px solid #f4f4f4;border-right-color:#888;border-bottom-color:#888"></div>
<svg style="left:1284px;top:517px" width="20" height="10"><path d="M0.5 1 L4.5 5 L8.5 1 L12.5 5 L16.5 1 M0.5 8.5 L4.5 4.5 L8.5 8.5 L12.5 4.5 L16.5 8.5" fill="none" stroke="#000" stroke-width="0.9"/><rect x="17.5" y="2.5" width="1.3" height="1.3" fill="#000"/><rect x="17.5" y="6.3" width="1.3" height="1.3" fill="#000"/></svg>
<div class="a" style="left:1277.2px;top:532px;width:33px;height:15px;background:#d8d8d8;border:1px solid #f4f4f4;border-right-color:#888;border-bottom-color:#888"></div>
<svg style="left:1284px;top:535px" width="20" height="10"><path d="M0.5 1 L4.5 5 L8.5 1 L12.5 5 L16.5 1 M0.5 8.5 L4.5 4.5 L8.5 8.5 L12.5 4.5 L16.5 8.5" fill="none" stroke="#000" stroke-width="0.9"/><rect x="17.5" y="2.5" width="1.3" height="1.3" fill="#000"/><rect x="17.5" y="6.3" width="1.3" height="1.3" fill="#000"/></svg>
<div class="a" style="left:1277.2px;top:550px;width:33px;height:15px;background:#d8d8d8;border:1px solid #f4f4f4;border-right-color:#888;border-bottom-color:#888"></div>
<svg style="left:1284px;top:553px" width="20" height="10"><path d="M0.5 1 L4.5 5 L8.5 1 L12.5 5 L16.5 1 M0.5 8.5 L4.5 4.5 L8.5 8.5 L12.5 4.5 L16.5 8.5" fill="none" stroke="#000" stroke-width="0.9"/><rect x="17.5" y="2.5" width="1.3" height="1.3" fill="#000"/><rect x="17.5" y="6.3" width="1.3" height="1.3" fill="#000"/></svg>
<div class="a" style="left:1277.2px;top:576px;width:33px;height:15px;background:#d8d8d8;border:1px solid #f4f4f4;border-right-color:#888;border-bottom-color:#888"></div>
<svg style="left:1284px;top:579px" width="20" height="10"><path d="M0.5 1 L4.5 5 L8.5 1 L12.5 5 L16.5 1 M0.5 8.5 L4.5 4.5 L8.5 8.5 L12.5 4.5 L16.5 8.5" fill="none" stroke="#000" stroke-width="0.9"/><rect x="17.5" y="2.5" width="1.3" height="1.3" fill="#000"/><rect x="17.5" y="6.3" width="1.3" height="1.3" fill="#000"/></svg>
<div class="a" style="left:1277.2px;top:594px;width:33px;height:15px;background:#d8d8d8;border:1px solid #f4f4f4;border-right-color:#888;border-bottom-color:#888"></div>
<svg style="left:1284px;top:597px" width="20" height="10"><path d="M0.5 1 L4.5 5 L8.5 1 L12.5 5 L16.5 1 M0.5 8.5 L4.5 4.5 L8.5 8.5 L12.5 4.5 L16.5 8.5" fill="none" stroke="#000" stroke-width="0.9"/><rect x="17.5" y="2.5" width="1.3" height="1.3" fill="#000"/><rect x="17.5" y="6.3" width="1.3" height="1.3" fill="#000"/></svg>
<div class="a" style="left:1277.2px;top:612px;width:33px;height:15px;background:#d8d8d8;border:1px solid #f4f4f4;border-right-color:#888;border-bottom-color:#888"></div>
<svg style="left:1284px;top:615px" width="20" height="10"><path d="M0.5 1 L4.5 5 L8.5 1 L12.5 5 L16.5 1 M0.5 8.5 L4.5 4.5 L8.5 8.5 L12.5 4.5 L16.5 8.5" fill="none" stroke="#000" stroke-width="0.9"/><rect x="17.5" y="2.5" width="1.3" height="1.3" fill="#000"/><rect x="17.5" y="6.3" width="1.3" height="1.3" fill="#000"/></svg>
<div class="a" style="left:1277.2px;top:630px;width:33px;height:15px;background:#d8d8d8;border:1px solid #f4f4f4;border-right-color:#888;border-bottom-color:#888"></div>
<svg style="left:1284px;top:633px" width="20" height="10"><path d="M0.5 1 L4.5 5 L8.5 1 L12.5 5 L16.5 1 M0.5 8.5 L4.5 4.5 L8.5 8.5 L12.5 4.5 L16.5 8.5" fill="none" stroke="#000" stroke-width="0.9"/><rect x="17.5" y="2.5" width="1.3" height="1.3" fill="#000"/><rect x="17.5" y="6.3" width="1.3" height="1.3" fill="#000"/></svg>
<div class="a" style="left:1277.2px;top:656px;width:33px;height:15px;background:#d8d8d8;border:1px solid #f4f4f4;border-right-color:#888;border-bottom-color:#888"></div>
<svg style="left:1284px;top:659px" width="20" height="10"><path d="M0.5 1 L4.5 5 L8.5 1 L12.5 5 L16.5 1 M0.5 8.5 L4.5 4.5 L8.5 8.5 L12.5 4.5 L16.5 8.5" fill="none" stroke="#000" stroke-width="0.9"/><rect x="17.5" y="2.5" width="1.3" height="1.3" fill="#000"/><rect x="17.5" y="6.3" width="1.3" height="1.3" fill="#000"/></svg>
<div class="a" style="left:1277.2px;top:674px;width:33px;height:15px;background:#d8d8d8;border:1px solid #f4f4f4;border-right-color:#888;border-bottom-color:#888"></div>
<svg style="left:1284px;top:677px" width="20" height="10"><path d="M0.5 1 L4.5 5 L8.5 1 L12.5 5 L16.5 1 M0.5 8.5 L4.5 4.5 L8.5 8.5 L12.5 4.5 L16.5 8.5" fill="none" stroke="#000" stroke-width="0.9"/><rect x="17.5" y="2.5" width="1.3" height="1.3" fill="#000"/><rect x="17.5" y="6.3" width="1.3" height="1.3" fill="#000"/></svg>
<div class="a" style="left:1277.2px;top:692px;width:33px;height:15px;background:#d8d8d8;border:1px solid #f4f4f4;border-right-color:#888;border-bottom-color:#888"></div>
<svg style="left:1284px;top:695px" width="20" height="10"><path d="M0.5 1 L4.5 5 L8.5 1 L12.5 5 L16.5 1 M0.5 8.5 L4.5 4.5 L8.5 8.5 L12.5 4.5 L16.5 8.5" fill="none" stroke="#000" stroke-width="0.9"/><rect x="17.5" y="2.5" width="1.3" height="1.3" fill="#000"/><rect x="17.5" y="6.3" width="1.3" height="1.3" fill="#000"/></svg>
<div class="a" style="left:1277.2px;top:710px;width:33px;height:15px;background:#d8d8d8;border:1px solid #f4f4f4;border-right-color:#888;border-bottom-color:#888"></div>
<svg style="left:1284px;top:713px" width="20" height="10"><path d="M0.5 1 L4.5 5 L8.5 1 L12.5 5 L16.5 1 M0.5 8.5 L4.5 4.5 L8.5 8.5 L12.5 4.5 L16.5 8.5" fill="none" stroke="#000" stroke-width="0.9"/><rect x="17.5" y="2.5" width="1.3" height="1.3" fill="#000"/><rect x="17.5" y="6.3" width="1.3" height="1.3" fill="#000"/></svg>
<div class="a" style="left:1277.2px;top:736px;width:33px;height:15px;background:#d8d8d8;border:1px solid #f4f4f4;border-right-color:#888;border-bottom-color:#888"></div>
<svg style="left:1284px;top:739px" width="20" height="10"><path d="M0.5 1 L4.5 5 L8.5 1 L12.5 5 L16.5 1 M0.5 8.5 L4.5 4.5 L8.5 8.5 L12.5 4.5 L16.5 8.5" fill="none" stroke="#000" stroke-width="0.9"/><rect x="17.5" y="2.5" width="1.3" height="1.3" fill="#000"/><rect x="17.5" y="6.3" width="1.3" height="1.3" fill="#000"/></svg>
<div class="a" style="left:1277.2px;top:754px;width:33px;height:15px;background:#d8d8d8;border:1px solid #f4f4f4;border-right-color:#888;border-bottom-color:#888"></div>
<svg style="left:1284px;top:757px" width="20" height="10"><path d="M0.5 1 L4.5 5 L8.5 1 L12.5 5 L16.5 1 M0.5 8.5 L4.5 4.5 L8.5 8.5 L12.5 4.5 L16.5 8.5" fill="none" stroke="#000" stroke-width="0.9"/><rect x="17.5" y="2.5" width="1.3" height="1.3" fill="#000"/><rect x="17.5" y="6.3" width="1.3" height="1.3" fill="#000"/></svg>
<div class="a" style="left:1277.2px;top:772px;width:33px;height:15px;background:#d8d8d8;border:1px solid #f4f4f4;border-right-color:#888;border-bottom-color:#888"></div>
<svg style="left:1284px;top:775px" width="20" height="10"><path d="M0.5 1 L4.5 5 L8.5 1 L12.5 5 L16.5 1 M0.5 8.5 L4.5 4.5 L8.5 8.5 L12.5 4.5 L16.5 8.5" fill="none" stroke="#000" stroke-width="0.9"/><rect x="17.5" y="2.5" width="1.3" height="1.3" fill="#000"/><rect x="17.5" y="6.3" width="1.3" height="1.3" fill="#000"/></svg>
<div class="a" style="left:1277.2px;top:790px;width:33px;height:15px;background:#d8d8d8;border:1px solid #f4f4f4;border-right-color:#888;border-bottom-color:#888"></div>
<svg style="left:1284px;top:793px" width="20" height="10"><path d="M0.5 1 L4.5 5 L8.5 1 L12.5 5 L16.5 1 M0.5 8.5 L4.5 4.5 L8.5 8.5 L12.5 4.5 L16.5 8.5" fill="none" stroke="#000" stroke-width="0.9"/><rect x="17.5" y="2.5" width="1.3" height="1.3" fill="#000"/><rect x="17.5" y="6.3" width="1.3" height="1.3" fill="#000"/></svg>
<div class="a" style="left:1277px;top:812.5px;width:13.6px;height:15px;background:#d8d8d8;border:1px solid #f4f4f4;border-right-color:#888;border-bottom-color:#888"></div>
<div class="t" style="left:1083.80px;width:400px;text-align:center;top:814.69px;font-size:11px;color:#000;font-weight:normal;">S</div>
<div class="a" style="left:1296.6px;top:812.5px;width:12.4px;height:15px;background:#d8d8d8;border:1px solid #f4f4f4;border-right-color:#888;border-bottom-color:#888"></div>
<div class="t" style="left:1102.80px;width:400px;text-align:center;top:814.69px;font-size:11px;color:#000;font-weight:normal;">L</div>
<div class="a" style="left:1270.5px;top:843.6px;width:40.0px;height:16.7px;background:#d8d8d8;border:1px solid #f4f4f4;border-right-color:#888;border-bottom-color:#888"></div>
<div class="t" style="left:1090.50px;width:400px;text-align:center;top:846.72px;font-size:11.5px;color:#000;font-weight:bold;">alle</div>
<div class="a" style="left:1270.5px;top:865px;width:40.0px;height:16px;background:#d8d8d8;border:1px solid #f4f4f4;border-right-color:#888;border-bottom-color:#888"></div>
<div class="t" style="left:1090.50px;width:400px;text-align:center;top:867.77px;font-size:11.5px;color:#000;font-weight:bold;">keine</div>
<div class="a" style="left:1276.5px;top:888.5px;width:34.0px;height:21.0px;background:#d8d8d8;border:1px solid #f4f4f4;border-right-color:#888;border-bottom-color:#888"></div>
<div class="t" style="left:1093.50px;width:400px;text-align:center;top:891.65px;font-size:14px;color:#000;font-weight:bold;text-shadow:0.4px 0 0 #000">#</div>
<div class="a" style="left:1px;top:927px;width:1314px;height:19px;background:#f0f0f0"></div>
<div class="a" style="left:3px;top:927.4px;width:198px;height:18px;border-top:1px solid #a0a0a0;border-left:1px solid #a0a0a0;border-right:1px solid #fff"></div>
<div class="a" style="left:205px;top:927.4px;width:67.8px;height:18px;border-top:1px solid #a0a0a0;border-left:1px solid #a0a0a0;border-right:1px solid #fff"></div>
<div class="a" style="left:277px;top:927.4px;width:92px;height:18px;border-top:1px solid #a0a0a0;border-left:1px solid #a0a0a0;border-right:1px solid #fff"></div>
<div class="a" style="left:373px;top:927.4px;width:747px;height:18px;border-top:1px solid #a0a0a0;border-left:1px solid #a0a0a0;border-right:1px solid #fff"></div>
<div class="a" style="left:1124px;top:927.4px;width:191px;height:18px;border-top:1px solid #a0a0a0;border-left:1px solid #a0a0a0;border-right:1px solid #fff"></div>
<div class="t" style="left:26.00px;top:931.07px;font-size:11.5px;color:#000;font-weight:normal;letter-spacing:-0.35px">Abs 37,700000 | 19,500000 mm</div>
<div class="t" style="left:216.80px;top:931.07px;font-size:11.5px;color:#000;font-weight:normal;letter-spacing:-0.35px">1225,08%</div>
<div class="t" style="left:284.50px;top:931.07px;font-size:11.5px;color:#000;font-weight:normal;letter-spacing:-0.35px">86 Pins</div>
<div class="t" style="left:1125.00px;top:931.07px;font-size:11.5px;color:#000;font-weight:normal;letter-spacing:-0.35px">V19.2.0.17</div>
<div class="t" style="left:1186.70px;top:931.07px;font-size:11.5px;color:#000;font-weight:normal;letter-spacing:-0.35px">9 Aug 2017 13:35.44</div>
<div class="a" style="left:495px;top:918px;width:330px;height:4px;overflow:hidden"><div class="t" style="left:5px;top:-6.5px;font-size:10px;font-weight:bold;color:#111;letter-spacing:-0.35px">(Werbung ausschalten über Menü &quot;Einstellungen&quot; Optionen / Banner )</div></div>
</body></html>
